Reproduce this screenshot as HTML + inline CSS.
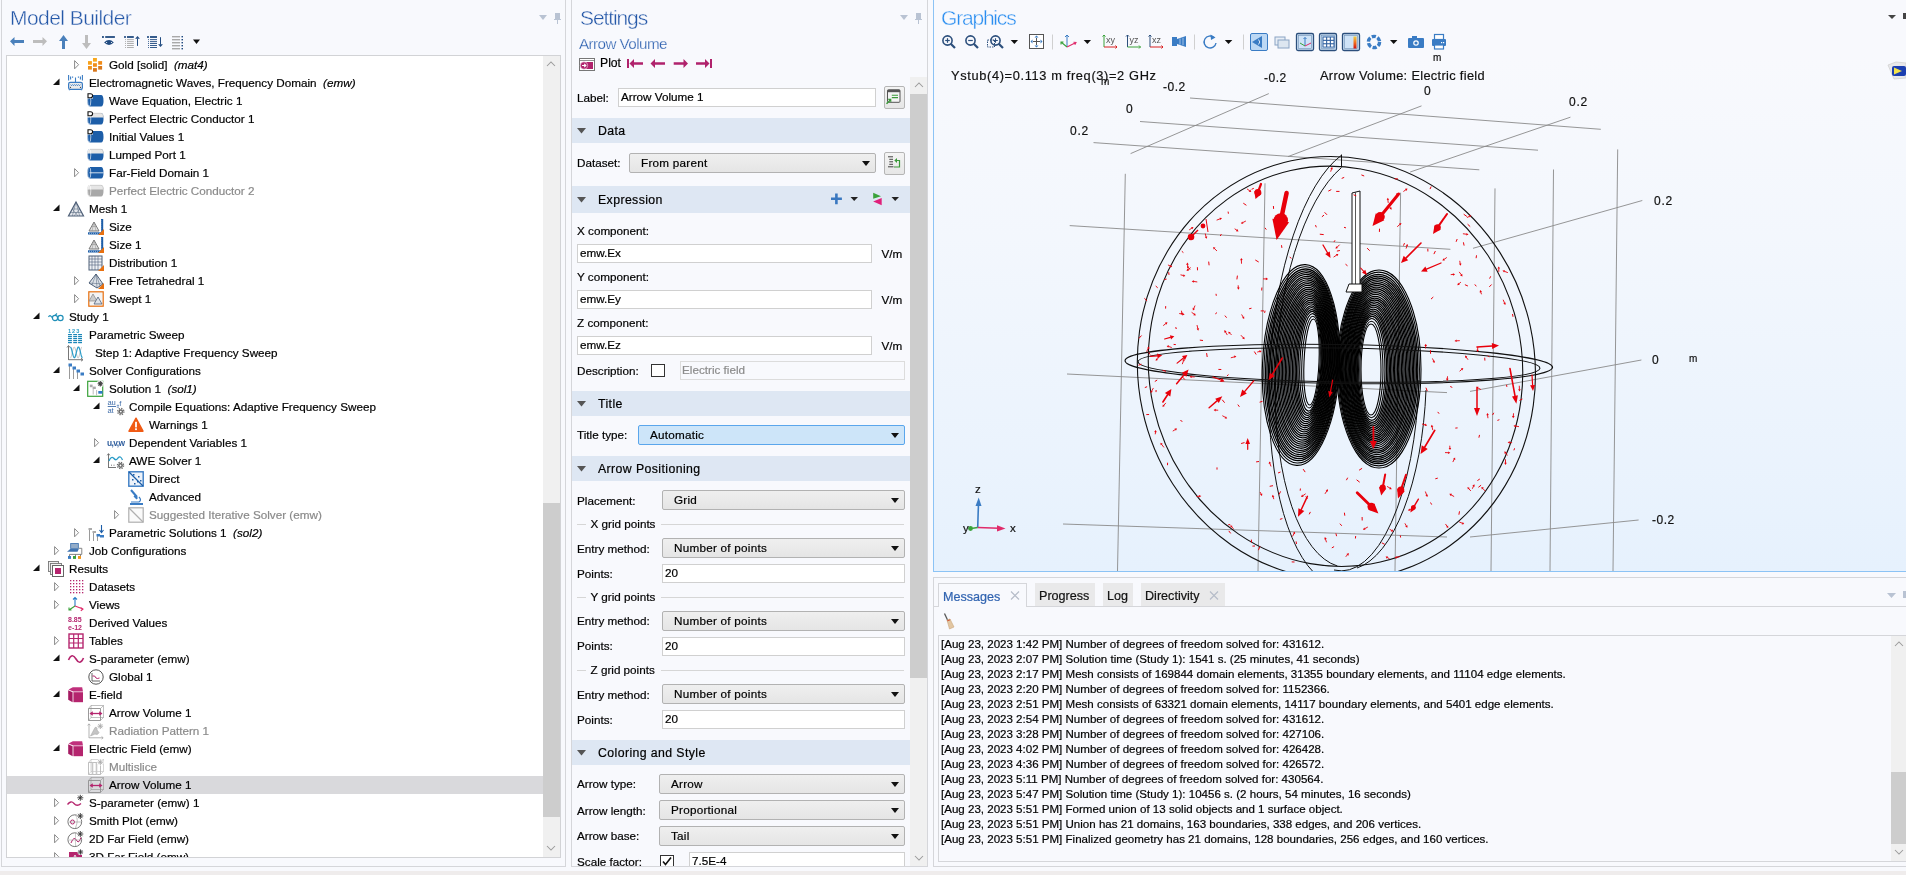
<!DOCTYPE html>
<html><head><meta charset="utf-8"><style>
html,body{margin:0;padding:0;}
body{width:1906px;height:875px;overflow:hidden;position:relative;background:#f8f9fd;font-family:"Liberation Sans",sans-serif;}
.t{position:absolute;white-space:pre;font-family:"Liberation Sans",sans-serif;-webkit-text-stroke:0.2px currentColor}
body>div,body>svg{will-change:transform}
svg{overflow:visible}
</style></head><body>
<div style="position:absolute;left:1px;top:0px;width:565px;height:867px;box-sizing:border-box;border-left:1px solid #d5d6da;border-right:1px solid #d5d6da;border-bottom:1px solid #d5d6da;background:#f8f9fd"></div>
<div style="position:absolute;left:571px;top:0px;width:357px;height:867px;box-sizing:border-box;border-left:1px solid #d5d6da;border-right:1px solid #d5d6da;border-bottom:1px solid #d5d6da;background:#f8f9fd"></div>
<div style="position:absolute;left:0px;top:871px;width:1906px;height:4px;background:#efecec"></div>
<div class="t" style="left:10.00px;top:8.42px;font-size:21px;line-height:20px;color:#2558a8;letter-spacing:-0.55px;-webkit-text-stroke:0.4px #f8f9fd">Model Builder</div>
<div class="t" style="left:579.50px;top:8.42px;font-size:21px;line-height:20px;color:#2558a8;letter-spacing:-1.1px;-webkit-text-stroke:0.4px #f8f9fd">Settings</div>
<svg style="position:absolute;left:539px;top:15px;" width="8" height="5" viewBox="0 0 8 5"><path d="M0 0H8L4 5Z" fill="#b9c3d3"/></svg>
<svg style="position:absolute;left:554px;top:13px;" width="7" height="11" viewBox="0 0 7 11"><path d="M1 0H6V6H7V7H4V11H3V7H0V6H1Z" fill="#b9c3d3"/></svg>
<svg style="position:absolute;left:900px;top:15px;" width="8" height="5" viewBox="0 0 8 5"><path d="M0 0H8L4 5Z" fill="#b9c3d3"/></svg>
<svg style="position:absolute;left:915px;top:13px;" width="7" height="11" viewBox="0 0 7 11"><path d="M1 0H6V6H7V7H4V11H3V7H0V6H1Z" fill="#b9c3d3"/></svg>
<svg style="position:absolute;left:0px;top:0px;" width="210" height="60" viewBox="0 0 210 60"><path d="M10 41.3L14.5 37V40H24V43H14.5V46Z" fill="#4a80bb"/><path d="M47 41.3L42.5 37V40H33V43H42.5V46Z" fill="#bdbdbd"/><path d="M63.5 35L68 41H65V49H62V41H59Z" fill="#4a80bb"/><path d="M86.5 49L91 43H88V35H85V43H82Z" fill="#bdbdbd"/><rect x="102" y="36.1" width="1.9" height="1.8" fill="#214b80"/><rect x="105.2" y="36.1" width="9.7" height="1.8" fill="#214b80"/><path d="M104.1 42.5Q109 37.6 113.8 42.5Q109 47.4 104.1 42.5Z" fill="#214b80"/><circle cx="106.6" cy="42.5" r="0.6" fill="#fff"/><circle cx="111.5" cy="42.5" r="0.6" fill="#fff"/><rect x="124.1" y="36.1" width="1.8" height="1.8" fill="#214b80"/><rect x="127" y="36.1" width="6.8" height="1.8" fill="#214b80"/><rect x="125" y="39.2" width="0.9" height="0.9" fill="#a0a0a0"/><rect x="127" y="39.2" width="6.8" height="0.9" fill="#a8a8a8"/><rect x="125" y="41.2" width="0.9" height="0.9" fill="#a0a0a0"/><rect x="127" y="41.2" width="6.8" height="0.9" fill="#a8a8a8"/><rect x="125" y="43.1" width="0.9" height="0.9" fill="#a0a0a0"/><rect x="127" y="43.1" width="6.8" height="0.9" fill="#a8a8a8"/><rect x="125" y="45.1" width="0.9" height="0.9" fill="#a0a0a0"/><rect x="127" y="45.1" width="6.8" height="0.9" fill="#a8a8a8"/><rect x="125" y="47.1" width="0.9" height="0.9" fill="#a0a0a0"/><rect x="127" y="47.1" width="6.8" height="0.9" fill="#a8a8a8"/><path d="M137.5 36.1L139.9 38.8H135.1Z" fill="#214b80"/><rect x="137" y="38.5" width="1" height="7.4" fill="#214b80"/><rect x="147.1" y="36.1" width="1.8" height="1.8" fill="#214b80"/><rect x="150" y="36.1" width="7" height="1.8" fill="#214b80"/><rect x="148.1" y="39.2" width="0.9" height="0.9" fill="#214b80"/><rect x="150" y="39.2" width="7" height="0.9" fill="#214b80"/><rect x="148.1" y="41.2" width="0.9" height="0.9" fill="#214b80"/><rect x="150" y="41.2" width="7" height="0.9" fill="#214b80"/><rect x="148.1" y="43.1" width="0.9" height="0.9" fill="#214b80"/><rect x="150" y="43.1" width="7" height="0.9" fill="#214b80"/><rect x="148.1" y="45.1" width="0.9" height="0.9" fill="#214b80"/><rect x="150" y="45.1" width="7" height="0.9" fill="#214b80"/><rect x="148.1" y="47.1" width="0.9" height="0.9" fill="#214b80"/><rect x="150" y="47.1" width="7" height="0.9" fill="#214b80"/><rect x="160" y="37.2" width="1" height="7.4" fill="#214b80"/><path d="M160.5 46.9L162.9 44.3H158.1Z" fill="#214b80"/><rect x="172" y="36" width="8" height="1.4" fill="#a9a9a9"/><rect x="181.5" y="36" width="1.5" height="1.4" fill="#214b80"/><rect x="172" y="39" width="8" height="1.4" fill="#a9a9a9"/><rect x="181.5" y="39" width="1.5" height="1.4" fill="#214b80"/><rect x="172" y="42" width="8" height="1.4" fill="#a9a9a9"/><rect x="181.5" y="42" width="1.5" height="1.4" fill="#214b80"/><rect x="172" y="45" width="8" height="1.4" fill="#a9a9a9"/><rect x="181.5" y="45" width="1.5" height="1.4" fill="#214b80"/><rect x="172" y="48" width="8" height="1.4" fill="#a9a9a9"/><rect x="181.5" y="48" width="1.5" height="1.4" fill="#214b80"/><path d="M193 39.5H200L196.5 44Z" fill="#111"/></svg>
<div style="position:absolute;left:6px;top:55px;width:555px;height:803px;box-sizing:border-box;border:1px solid #d2d3d6;background:#fff"></div>
<div style="position:absolute;left:543px;top:56px;width:17px;height:801px;background:#f0f0f0"></div>
<div style="position:absolute;left:543px;top:503px;width:17px;height:314px;background:#cdcdcd"></div>
<svg style="position:absolute;left:546px;top:61px;" width="10" height="6" viewBox="0 0 10 6"><path d="M1 5L5 1L9 5" stroke="#9a9a9a" stroke-width="1.05" fill="none"/></svg>
<svg style="position:absolute;left:546px;top:845px;" width="10" height="6" viewBox="0 0 10 6"><path d="M1 1L5 5L9 1" stroke="#9a9a9a" stroke-width="1.05" fill="none"/></svg>
<div style="position:absolute;left:7px;top:776px;width:536px;height:18px;background:#d9d9dc"></div>
<div style="position:absolute;left:0;top:0;width:560px;height:857px;overflow:hidden;clip-path:inset(56px 17px 0 7px)"><div class="t" style="left:109.00px;top:54.95px;font-size:11.7px;line-height:20px;color:#000;">Gold [solid]  <i>(mat4)</i></div><div class="t" style="left:89.00px;top:72.95px;font-size:11.7px;line-height:20px;color:#000;">Electromagnetic Waves, Frequency Domain  <i>(emw)</i></div><div class="t" style="left:109.00px;top:90.95px;font-size:11.7px;line-height:20px;color:#000;">Wave Equation, Electric 1</div><div class="t" style="left:109.00px;top:108.95px;font-size:11.7px;line-height:20px;color:#000;">Perfect Electric Conductor 1</div><div class="t" style="left:109.00px;top:126.95px;font-size:11.7px;line-height:20px;color:#000;">Initial Values 1</div><div class="t" style="left:109.00px;top:144.95px;font-size:11.7px;line-height:20px;color:#000;">Lumped Port 1</div><div class="t" style="left:109.00px;top:162.95px;font-size:11.7px;line-height:20px;color:#000;">Far-Field Domain 1</div><div class="t" style="left:109.00px;top:180.95px;font-size:11.7px;line-height:20px;color:#8a8a8a;">Perfect Electric Conductor 2</div><div class="t" style="left:89.00px;top:198.95px;font-size:11.7px;line-height:20px;color:#000;">Mesh 1</div><div class="t" style="left:109.00px;top:216.95px;font-size:11.7px;line-height:20px;color:#000;">Size</div><div class="t" style="left:109.00px;top:234.95px;font-size:11.7px;line-height:20px;color:#000;">Size 1</div><div class="t" style="left:109.00px;top:252.95px;font-size:11.7px;line-height:20px;color:#000;">Distribution 1</div><div class="t" style="left:109.00px;top:270.95px;font-size:11.7px;line-height:20px;color:#000;">Free Tetrahedral 1</div><div class="t" style="left:109.00px;top:288.95px;font-size:11.7px;line-height:20px;color:#000;">Swept 1</div><div class="t" style="left:69.00px;top:306.95px;font-size:11.7px;line-height:20px;color:#000;">Study 1</div><div class="t" style="left:89.00px;top:324.95px;font-size:11.7px;line-height:20px;color:#000;">Parametric Sweep</div><div class="t" style="left:95.00px;top:342.95px;font-size:11.7px;line-height:20px;color:#000;">Step 1: Adaptive Frequency Sweep</div><div class="t" style="left:89.00px;top:360.95px;font-size:11.7px;line-height:20px;color:#000;">Solver Configurations</div><div class="t" style="left:109.00px;top:378.95px;font-size:11.7px;line-height:20px;color:#000;">Solution 1  <i>(sol1)</i></div><div class="t" style="left:129.00px;top:396.95px;font-size:11.7px;line-height:20px;color:#000;">Compile Equations: Adaptive Frequency Sweep</div><div class="t" style="left:149.00px;top:414.95px;font-size:11.7px;line-height:20px;color:#000;">Warnings 1</div><div class="t" style="left:129.00px;top:432.95px;font-size:11.7px;line-height:20px;color:#000;">Dependent Variables 1</div><div class="t" style="left:129.00px;top:450.95px;font-size:11.7px;line-height:20px;color:#000;">AWE Solver 1</div><div class="t" style="left:149.00px;top:468.95px;font-size:11.7px;line-height:20px;color:#000;">Direct</div><div class="t" style="left:149.00px;top:486.95px;font-size:11.7px;line-height:20px;color:#000;">Advanced</div><div class="t" style="left:149.00px;top:504.95px;font-size:11.7px;line-height:20px;color:#8a8a8a;">Suggested Iterative Solver (emw)</div><div class="t" style="left:109.00px;top:522.95px;font-size:11.7px;line-height:20px;color:#000;">Parametric Solutions 1  <i>(sol2)</i></div><div class="t" style="left:89.00px;top:540.95px;font-size:11.7px;line-height:20px;color:#000;">Job Configurations</div><div class="t" style="left:69.00px;top:558.95px;font-size:11.7px;line-height:20px;color:#000;">Results</div><div class="t" style="left:89.00px;top:576.95px;font-size:11.7px;line-height:20px;color:#000;">Datasets</div><div class="t" style="left:89.00px;top:594.95px;font-size:11.7px;line-height:20px;color:#000;">Views</div><div class="t" style="left:89.00px;top:612.95px;font-size:11.7px;line-height:20px;color:#000;">Derived Values</div><div class="t" style="left:89.00px;top:630.95px;font-size:11.7px;line-height:20px;color:#000;">Tables</div><div class="t" style="left:89.00px;top:648.95px;font-size:11.7px;line-height:20px;color:#000;">S-parameter (emw)</div><div class="t" style="left:109.00px;top:666.95px;font-size:11.7px;line-height:20px;color:#000;">Global 1</div><div class="t" style="left:89.00px;top:684.95px;font-size:11.7px;line-height:20px;color:#000;">E-field</div><div class="t" style="left:109.00px;top:702.95px;font-size:11.7px;line-height:20px;color:#000;">Arrow Volume 1</div><div class="t" style="left:109.00px;top:720.95px;font-size:11.7px;line-height:20px;color:#8a8a8a;">Radiation Pattern 1</div><div class="t" style="left:89.00px;top:738.95px;font-size:11.7px;line-height:20px;color:#000;">Electric Field (emw)</div><div class="t" style="left:109.00px;top:756.95px;font-size:11.7px;line-height:20px;color:#8a8a8a;">Multislice</div><div class="t" style="left:109.00px;top:774.95px;font-size:11.7px;line-height:20px;color:#000;">Arrow Volume 1</div><div class="t" style="left:89.00px;top:792.95px;font-size:11.7px;line-height:20px;color:#000;">S-parameter (emw) 1</div><div class="t" style="left:89.00px;top:810.95px;font-size:11.7px;line-height:20px;color:#000;">Smith Plot (emw)</div><div class="t" style="left:89.00px;top:828.95px;font-size:11.7px;line-height:20px;color:#000;">2D Far Field (emw)</div><div class="t" style="left:89.00px;top:846.95px;font-size:11.7px;line-height:20px;color:#000;">3D Far Field (emw)</div><svg style="position:absolute;left:0px;top:0px;" width="560" height="857" viewBox="0 0 560 857"><g transform="translate(88,57)"><rect x="5" y="1" width="3.9" height="3.6" fill="#f9a81c"/><rect x="0" y="4.1" width="3.9" height="3.6" fill="#f8a21a"/><rect x="5" y="6.2" width="3.9" height="3.6" fill="#f08e1a"/><rect x="10.2" y="4.1" width="3.9" height="3.6" fill="#f08a16"/><rect x="0" y="9" width="3.9" height="3.6" fill="#f0901a"/><rect x="5" y="11.1" width="3.9" height="3.6" fill="#d8761a"/><rect x="10.2" y="9" width="3.9" height="3.6" fill="#d9781a"/></g><path d="M74.6 60.6L78.6 64.7L74.6 68.8Z" fill="#fff" stroke="#8a8a8a" stroke-width="1"/><g transform="translate(68,75)"><path d="M0.6 0V5.5M14.4 0V5.5M2.6 1.5V4.5M12.4 1.5V4.5M4.6 1.5V2.8M10.4 1.5V2.8M7.5 2.5V7.5" stroke="#3a7cc4" stroke-width="1.1"/><rect x="0.6" y="7.3" width="13.8" height="7" rx="1.6" fill="#ebebeb" stroke="#3a7cc4" stroke-width="1.2"/><path d="M2.5 9.6L3.5 10.6L4.5 9.6L5.5 10.6L6.5 9.6L7.5 10.6L8.5 9.6L9.5 10.6L10.5 9.6L11.5 10.6L12.5 9.6" stroke="#3a7cc4" stroke-width="1" fill="none"/><circle cx="2.5" cy="12.3" r="0.6" fill="#333"/><circle cx="12.5" cy="12.3" r="0.6" fill="#333"/><path d="M1.5 14.5V15.3M13.5 14.5V15.3" stroke="#3a7cc4" stroke-width="1.2"/></g><path d="M53 85H59.5V78.5Z" fill="#111"/><g transform="translate(88,93)"><path d="M2 2H13Q15.5 2 15.5 7.8Q15.5 13.6 13 13.6H2Q-0.8 13.6 -0.8 7.8Q-0.8 2 2 2Z" fill="#1d5ea8"/><ellipse cx="1.2" cy="7.8" rx="1.6" ry="5.6" fill="none" stroke="#fff" stroke-width="0.7" opacity="0.9"/><rect x="-1" y="0" width="6" height="5.5" fill="#fff"/><path d="M0 0.8H2.4Q4.6 0.8 4.6 2.8Q4.6 4.8 2.4 4.8H0Z" fill="none" stroke="#111" stroke-width="1.1"/></g><g transform="translate(88,111)"><path d="M2 2H13Q15.5 2 15.5 7.8Q15.5 13.6 13 13.6H2Q-0.8 13.6 -0.8 7.8Q-0.8 2 2 2Z" fill="#1d5ea8"/><path d="M2 2H13Q15.5 2 15.5 6.5H-0.8Q-0.8 2 2 2Z" fill="#e6e6e6"/><path d="M2 2.3H13Q15.2 2.3 15.3 6.5" stroke="#bdbdbd" stroke-width="0.6" fill="none"/><ellipse cx="1.2" cy="7.8" rx="1.6" ry="5.6" fill="none" stroke="#fff" stroke-width="0.7" opacity="0.9"/><rect x="-1" y="0" width="6" height="5.5" fill="#fff"/><path d="M0 0.8H2.4Q4.6 0.8 4.6 2.8Q4.6 4.8 2.4 4.8H0Z" fill="none" stroke="#111" stroke-width="1.1"/></g><g transform="translate(88,129)"><path d="M2 2H13Q15.5 2 15.5 7.8Q15.5 13.6 13 13.6H2Q-0.8 13.6 -0.8 7.8Q-0.8 2 2 2Z" fill="#1d5ea8"/><ellipse cx="1.2" cy="7.8" rx="1.6" ry="5.6" fill="none" stroke="#fff" stroke-width="0.7" opacity="0.9"/><rect x="-1" y="0" width="6" height="5.5" fill="#fff"/><path d="M0 0.8H2.4Q4.6 0.8 4.6 2.8Q4.6 4.8 2.4 4.8H0Z" fill="none" stroke="#111" stroke-width="1.1"/></g><g transform="translate(88,147)"><path d="M2 2H13Q15.5 2 15.5 7.8Q15.5 13.6 13 13.6H2Q-0.8 13.6 -0.8 7.8Q-0.8 2 2 2Z" fill="#1d5ea8"/><path d="M2 2H13Q15.5 2 15.5 6.5H-0.8Q-0.8 2 2 2Z" fill="#e6e6e6"/><path d="M2 2.3H13Q15.2 2.3 15.3 6.5" stroke="#bdbdbd" stroke-width="0.6" fill="none"/><ellipse cx="1.2" cy="7.8" rx="1.6" ry="5.6" fill="none" stroke="#fff" stroke-width="0.7" opacity="0.9"/></g><g transform="translate(88,165)"><path d="M2 2H13Q15.5 2 15.5 7.8Q15.5 13.6 13 13.6H2Q-0.8 13.6 -0.8 7.8Q-0.8 2 2 2Z" fill="#1d5ea8"/><ellipse cx="1.2" cy="7.8" rx="1.6" ry="5.6" fill="none" stroke="#fff" stroke-width="0.7" opacity="0.9"/><path d="M1.5 7.8H15.5" stroke="#fff" stroke-width="0.8"/></g><path d="M74.6 168.6L78.6 172.7L74.6 176.8Z" fill="#fff" stroke="#8a8a8a" stroke-width="1"/><g transform="translate(88,183)"><path d="M2 2H13Q15.5 2 15.5 7.8Q15.5 13.6 13 13.6H2Q-0.8 13.6 -0.8 7.8Q-0.8 2 2 2Z" fill="#a8a8a8"/><path d="M2 2H13Q15.5 2 15.5 6.5H-0.8Q-0.8 2 2 2Z" fill="#e6e6e6"/><path d="M2 2.3H13Q15.2 2.3 15.3 6.5" stroke="#bdbdbd" stroke-width="0.6" fill="none"/><ellipse cx="1.2" cy="7.8" rx="1.6" ry="5.6" fill="none" stroke="#fff" stroke-width="0.7" opacity="0.9"/></g><g transform="translate(68,201)"><path d="M8 1L15.5 15H0.5Z" fill="#e4e7ec" stroke="#4f6078" stroke-width="1.2"/><path d="M4.3 8H11.7M2.4 11.5H13.6M8 1L4.3 15M8 1L11.7 15M4.3 8L10 15M11.7 8L6 15" stroke="#4f6078" stroke-width="0.5"/></g><path d="M53 211H59.5V204.5Z" fill="#111"/><g transform="translate(88,219)"><path d="M6 3L11 12H1Z" fill="#e2e2e2" stroke="#7a7a7a" stroke-width="1"/><path d="M3.5 7.5H8.5M6 3L4 12M6 3L8 12" stroke="#8a8a8a" stroke-width="0.5"/><rect x="13" y="0" width="2.2" height="14" fill="#1d5ea8"/><rect x="0" y="13.3" width="15" height="2.2" fill="#1d5ea8"/><path d="M13.2 1.5V13M1 14.4H13" stroke="#fff" stroke-width="0.6" stroke-dasharray="0.8 1.2"/><path d="M16 10V16H10Z" fill="#e8700f"/></g><g transform="translate(88,237)"><path d="M6 3L11 12H1Z" fill="#e2e2e2" stroke="#7a7a7a" stroke-width="1"/><path d="M3.5 7.5H8.5M6 3L4 12M6 3L8 12" stroke="#8a8a8a" stroke-width="0.5"/><rect x="13" y="0" width="2.2" height="14" fill="#1d5ea8"/><rect x="0" y="13.3" width="15" height="2.2" fill="#1d5ea8"/><path d="M13.2 1.5V13M1 14.4H13" stroke="#fff" stroke-width="0.6" stroke-dasharray="0.8 1.2"/><path d="M16 10V16H10Z" fill="#e8700f"/></g><g transform="translate(88,255)"><rect x="1" y="1" width="13" height="14" fill="#eef1f5" stroke="#4f6078" stroke-width="1"/><path d="M4 1V15M7 1V15M10 1V15M1 4H14M1 7H14M1 10H14" stroke="#4f6078" stroke-width="0.6"/><path d="M16 10V16H10Z" fill="#e8700f"/></g><g transform="translate(88,273)"><path d="M8 1L15 11L9 15L1 10Z" fill="#dde2e8" stroke="#4f6078" stroke-width="1"/><path d="M8 1L9 15M1 10L15 11M8 1L4 12M8 1L12 13" stroke="#4f6078" stroke-width="0.5"/><path d="M16 10V16H10Z" fill="#e8700f"/></g><path d="M74.6 276.6L78.6 280.7L74.6 284.8Z" fill="#fff" stroke="#8a8a8a" stroke-width="1"/><g transform="translate(88,291)"><rect x="0.8" y="0.8" width="14.4" height="14.4" fill="#f4f4f4" stroke="#e8700f" stroke-width="1.2"/><path d="M5 3L9 10H1Z" fill="#ccc" stroke="#888" stroke-width="0.7"/><path d="M10 6L14 13H6Z" fill="#dde2e8" stroke="#4f6078" stroke-width="0.8"/></g><path d="M74.6 294.6L78.6 298.7L74.6 302.8Z" fill="#fff" stroke="#8a8a8a" stroke-width="1"/><g transform="translate(48,309)"><path d="M0.5 8Q2 5 4 8.5" stroke="#1f8fb8" stroke-width="1.2" fill="none"/><circle cx="7" cy="9" r="2.6" fill="none" stroke="#1f8fb8" stroke-width="1.2"/><circle cx="12.5" cy="9" r="2.6" fill="none" stroke="#1f8fb8" stroke-width="1.2"/><path d="M7 6.4L9 4.5" stroke="#1f8fb8" stroke-width="1.1"/></g><path d="M33 319H39.5V312.5Z" fill="#111"/><g transform="translate(68,327)"><text x="0" y="5.6" font-size="5.6" font-weight="bold" fill="#2a9cc8" font-family="Liberation Sans" letter-spacing="-0.3">1 2 3</text><rect x="0" y="7" width="3.9" height="1.2" fill="#1a86b8"/><rect x="5.2" y="7" width="3.9" height="1.2" fill="#1a86b8"/><rect x="10.1" y="7" width="3.9" height="1.2" fill="#1a86b8"/><rect x="0" y="9" width="3.9" height="1.2" fill="#1a86b8"/><rect x="5.2" y="9" width="3.9" height="1.2" fill="#1a86b8"/><rect x="10.1" y="9" width="3.9" height="1.2" fill="#1a86b8"/><rect x="0" y="11" width="3.9" height="1.2" fill="#1a86b8"/><rect x="5.2" y="11" width="3.9" height="1.2" fill="#1a86b8"/><rect x="10.1" y="11" width="3.9" height="1.2" fill="#1a86b8"/><rect x="0" y="13" width="3.9" height="1.2" fill="#1a86b8"/><rect x="5.2" y="13" width="3.9" height="1.2" fill="#1a86b8"/><rect x="10.1" y="13" width="3.9" height="1.2" fill="#1a86b8"/><rect x="0" y="15" width="3.9" height="1.2" fill="#1a86b8"/><rect x="5.2" y="15" width="3.9" height="1.2" fill="#1a86b8"/><rect x="10.1" y="15" width="3.9" height="1.2" fill="#1a86b8"/></g><g transform="translate(68,345)"><path d="M0.5 15V1M-1 2.5L0.5 0.5L2 2.5M0.5 14.7H15M13 13.2L15 14.7L13 16.2" stroke="#777" stroke-width="1" fill="none"/><path d="M2.30 13.00L2.59 12.85L2.88 12.40L3.18 11.68L3.47 10.73L3.76 9.60L4.05 8.36L4.35 7.07L4.64 5.80L4.93 4.63L5.22 3.61L5.52 2.81L5.81 2.27L6.10 2.02L6.39 2.07L6.69 2.42L6.98 3.05L7.27 3.93L7.56 5.00L7.86 6.22L8.15 7.50L8.44 8.78L8.73 10.00L9.03 11.07L9.32 11.95L9.61 12.58L9.90 12.93L10.20 12.98L10.49 12.73L10.78 12.19L11.07 11.39L11.37 10.37L11.66 9.20L11.95 7.93L12.24 6.64L12.54 5.40L12.83 4.27L13.12 3.32L13.41 2.60L13.71 2.15L14.00 2.00" stroke="#bbb" stroke-width="0.9" fill="none"/><path d="M2.30 2.00L2.60 2.15L2.91 2.58L3.21 3.28L3.52 4.21L3.82 5.30L4.13 6.51L4.43 7.77L4.74 9.00L5.04 10.15L5.35 11.13L5.65 11.91L5.96 12.44L6.26 12.68L6.57 12.63L6.87 12.29L7.18 11.68L7.48 10.82L7.79 9.78L8.09 8.60L8.40 7.35L8.71 6.10L9.01 4.92L9.31 3.88L9.62 3.02L9.93 2.41L10.23 2.07L10.54 2.02L10.84 2.26L11.14 2.79L11.45 3.57L11.75 4.55L12.06 5.70L12.36 6.93L12.67 8.19L12.97 9.40L13.28 10.49L13.59 11.42L13.89 12.12L14.20 12.55L14.50 12.70" stroke="#2a9cc8" stroke-width="1.2" fill="none"/></g><g transform="translate(68,363)"><path d="M1.5 2V16M5.5 5V16M9.5 8V16" stroke="#9a9a9a" stroke-width="1"/><rect x="0.5" y="0.5" width="3.5" height="3" fill="#3a7cc4"/><rect x="4.5" y="3.5" width="3.5" height="3" fill="#3a7cc4"/><rect x="8.5" y="6.5" width="3.5" height="3" fill="#3a7cc4"/><rect x="12.5" y="9.5" width="3.5" height="3" fill="#3a7cc4"/></g><path d="M53 373H59.5V366.5Z" fill="#111"/><g transform="translate(88,381)"><rect x="-0.3" y="3.3" width="15" height="15" fill="#fff" stroke="#3aa23a" stroke-width="1.2" transform="translate(0,-3)"/><rect x="1.8" y="3.6" width="2.8" height="2.6" fill="#aaa"/><rect x="4.6" y="5.6" width="3.2" height="2.4" fill="#aaa"/><path d="M5.2 8V13.5" stroke="#bbb" stroke-width="1"/><rect x="10.3" y="10" width="4.2" height="2.7" fill="#2f7bc8"/><path d="M8.6 9V14.5" stroke="#bbb" stroke-width="1"/><circle cx="12.3" cy="2.7" r="3.4" fill="#fff"/><path d="M12.3 0V5.4M9.6 2.7H15M10.4 0.8L14.2 4.6M14.2 0.8L10.4 4.6" stroke="#444" stroke-width="1.1"/></g><path d="M73 391H79.5V384.5Z" fill="#111"/><g transform="translate(108,399)"><text x="-0.5" y="6.2" font-size="7.6" fill="#3d6ba8" font-family="Liberation Sans" letter-spacing="-0.3">au</text><path d="M-0.3 7.5H8" stroke="#3d6ba8" stroke-width="0.9"/><text x="-0.5" y="13.6" font-size="7.6" fill="#3d6ba8" font-family="Liberation Sans" letter-spacing="-0.3">at</text><text x="11.2" y="6.5" font-size="7.6" fill="#3d6ba8" font-family="Liberation Sans">f</text><path d="M8.8 6.3H11M8.8 8.1H11" stroke="#3d6ba8" stroke-width="0.8"/><circle cx="12.8" cy="12.6" r="2.4" fill="#6a6a6a"/><circle cx="12.8" cy="12.6" r="3.1" fill="none" stroke="#6a6a6a" stroke-width="1.3" stroke-dasharray="1.3 1.13"/><circle cx="12.8" cy="12.6" r="0.9" fill="#fff"/></g><path d="M93 409H99.5V402.5Z" fill="#111"/><g transform="translate(128,417)"><path d="M8 1.2L15 14.2H1Z" fill="#f05a14" stroke="#f05a14" stroke-width="1.4" stroke-linejoin="round"/><rect x="7.1" y="4.8" width="1.8" height="5.6" fill="#fff"/><rect x="7.1" y="11.3" width="1.8" height="1.8" fill="#fff"/></g><g transform="translate(108,435)"><text x="-1" y="10.5" font-size="8.4" font-weight="bold" fill="#2f5e9e" font-family="Liberation Sans" letter-spacing="-0.6">u,v,w</text></g><path d="M94.6 438.6L98.6 442.7L94.6 446.8Z" fill="#fff" stroke="#8a8a8a" stroke-width="1"/><g transform="translate(108,453)"><path d="M0.5 15V1M-0.8 2.3L0.5 0.6L1.8 2.3M0.5 14.5H8" stroke="#666" stroke-width="0.9" fill="none"/><path d="M1 8Q3 3 5.5 5Q8 8.5 10 5Q12.5 2 14.5 7" stroke="#2a9cc8" stroke-width="1.3" fill="none"/><path d="M3 12.2H4M5.5 12.2H6.5" stroke="#666" stroke-width="0.9"/><circle cx="12.5" cy="12.5" r="2.4" fill="#6a6a6a"/><circle cx="12.5" cy="12.5" r="3.1" fill="none" stroke="#6a6a6a" stroke-width="1.3" stroke-dasharray="1.3 1.13"/><circle cx="12.5" cy="12.5" r="0.9" fill="#fff"/></g><path d="M93 463H99.5V456.5Z" fill="#111"/><g transform="translate(128,471)"><rect x="0.8" y="0.8" width="14.4" height="14.4" fill="#eef3fa" stroke="#3a7cc4" stroke-width="1.4"/><path d="M1 1L15 15" stroke="#1d5ea8" stroke-width="1.2"/><rect x="5" y="3" width="1.5" height="1.5" fill="#1d5ea8"/><rect x="10" y="5" width="1.5" height="1.5" fill="#1d5ea8"/><rect x="4" y="8" width="1.5" height="1.5" fill="#1d5ea8"/><rect x="9" y="10" width="1.5" height="1.5" fill="#1d5ea8"/><rect x="12" y="9" width="1.5" height="1.5" fill="#1d5ea8"/><rect x="6" y="12" width="1.5" height="1.5" fill="#1d5ea8"/></g><g transform="translate(128,489)"><path d="M3 1L9 8" stroke="#3a7cc4" stroke-width="2"/><path d="M7 6L10 9L8.5 10.5L5.5 7.5Z" fill="#3a7cc4"/><path d="M11 8Q14 11 11 13H3" stroke="#3a7cc4" stroke-width="1.2" fill="none"/><rect x="2" y="14" width="13" height="2" fill="#3a7cc4"/></g><g transform="translate(128,507)"><rect x="0.8" y="0.8" width="14.4" height="14.4" fill="#fafafa" stroke="#b0b0b0" stroke-width="1.2"/><path d="M1 1L15 15" stroke="#b0b0b0" stroke-width="1.2"/></g><path d="M114.6 510.6L118.6 514.7L114.6 518.8Z" fill="#fff" stroke="#8a8a8a" stroke-width="1"/><g transform="translate(88,525)"><path d="M1.5 4V16M5.5 6V16M9.5 9V16" stroke="#9a9a9a" stroke-width="1"/><rect x="0.5" y="3" width="3.5" height="2" fill="#aaa"/><rect x="4.5" y="6" width="3.5" height="2" fill="#aaa"/><rect x="8.5" y="9" width="3.5" height="2.5" fill="#3a7cc4"/><rect x="12" y="10" width="4" height="2.5" fill="#3a7cc4"/><path d="M13.5 0V7M11.5 5L13.5 7.5L15.5 5" stroke="#1d5ea8" stroke-width="1.1" fill="none"/></g><path d="M74.6 528.6L78.6 532.7L74.6 536.8Z" fill="#fff" stroke="#8a8a8a" stroke-width="1"/><g transform="translate(68,543)"><rect x="2.2" y="0.1" width="8.6" height="5.8" fill="#3f73b0"/><rect x="3.1" y="1" width="6.8" height="4.2" fill="#93acc8"/><path d="M2.2 5.9H10.8L9.5 8.8H-1Z" fill="#3f73b0"/><path d="M10.8 5.3H13.8V11.4H1.5V13M7.5 11.4V13M12.5 11.4V13" stroke="#777" stroke-width="0.9" fill="none"/><rect x="0" y="13" width="3" height="2.9" fill="#3a7cc4"/><rect x="5" y="13" width="3" height="2.9" fill="#3aa23a"/><rect x="10" y="13" width="3" height="2.9" fill="#f5961a"/></g><path d="M54.6 546.6L58.6 550.7L54.6 554.8Z" fill="#fff" stroke="#8a8a8a" stroke-width="1"/><g transform="translate(48,561)"><rect x="0.5" y="0.5" width="10" height="10" fill="#eee" stroke="#777" stroke-width="0.9"/><rect x="2.5" y="2.5" width="11" height="11" fill="#f3f3f3" stroke="#777" stroke-width="0.9"/><rect x="4.5" y="4.5" width="11" height="11" fill="#fff" stroke="#666" stroke-width="1"/><rect x="7" y="7" width="6" height="6" fill="#b5256e"/></g><path d="M33 571H39.5V564.5Z" fill="#111"/><g transform="translate(68,579)"><rect x="2" y="1" width="1.3" height="1.3" fill="#b5256e"/><rect x="5" y="1" width="1.3" height="1.3" fill="#b5256e"/><rect x="8" y="1" width="1.3" height="1.3" fill="#b5256e"/><rect x="11" y="1" width="1.3" height="1.3" fill="#b5256e"/><rect x="14" y="1" width="1.3" height="1.3" fill="#b5256e"/><rect x="2" y="4" width="1.3" height="1.3" fill="#b5256e"/><rect x="5" y="4" width="1.3" height="1.3" fill="#b5256e"/><rect x="8" y="4" width="1.3" height="1.3" fill="#b5256e"/><rect x="11" y="4" width="1.3" height="1.3" fill="#b5256e"/><rect x="14" y="4" width="1.3" height="1.3" fill="#b5256e"/><rect x="2" y="7" width="1.3" height="1.3" fill="#b5256e"/><rect x="5" y="7" width="1.3" height="1.3" fill="#b5256e"/><rect x="8" y="7" width="1.3" height="1.3" fill="#b5256e"/><rect x="11" y="7" width="1.3" height="1.3" fill="#b5256e"/><rect x="14" y="7" width="1.3" height="1.3" fill="#b5256e"/><rect x="2" y="10" width="1.3" height="1.3" fill="#b5256e"/><rect x="5" y="10" width="1.3" height="1.3" fill="#b5256e"/><rect x="8" y="10" width="1.3" height="1.3" fill="#b5256e"/><rect x="11" y="10" width="1.3" height="1.3" fill="#b5256e"/><rect x="14" y="10" width="1.3" height="1.3" fill="#b5256e"/><rect x="2" y="13" width="1.3" height="1.3" fill="#b5256e"/><rect x="5" y="13" width="1.3" height="1.3" fill="#b5256e"/><rect x="8" y="13" width="1.3" height="1.3" fill="#b5256e"/><rect x="11" y="13" width="1.3" height="1.3" fill="#b5256e"/><rect x="14" y="13" width="1.3" height="1.3" fill="#b5256e"/></g><path d="M54.6 582.6L58.6 586.7L54.6 590.8Z" fill="#fff" stroke="#8a8a8a" stroke-width="1"/><g transform="translate(68,597)"><path d="M7 9V0.5M5 2.5L7 0.5L9 2.5" stroke="#2a7cc8" stroke-width="1.1" fill="none"/><path d="M7 9L1 13M1 10.5V13H3.5" stroke="#3aa23a" stroke-width="1.1" fill="none"/><path d="M7 9L15 12M12.5 10.5L15 12L12.8 13.8" stroke="#e02a6a" stroke-width="1.1" fill="none"/></g><path d="M54.6 600.6L58.6 604.7L54.6 608.8Z" fill="#fff" stroke="#8a8a8a" stroke-width="1"/><g transform="translate(68,615)"><text x="0" y="7" font-size="7" font-weight="bold" fill="#b5256e" font-family="Liberation Sans">8.85</text><text x="0" y="15" font-size="7" font-weight="bold" fill="#b5256e" font-family="Liberation Sans">e-12</text></g><g transform="translate(68,633)"><rect x="1" y="1" width="14" height="14" fill="none" stroke="#b5256e" stroke-width="1.4"/><path d="M1 5.5H15M1 10H15M5.7 1V15M10.3 1V15" stroke="#b5256e" stroke-width="1.2"/></g><path d="M54.6 636.6L58.6 640.7L54.6 644.8Z" fill="#fff" stroke="#8a8a8a" stroke-width="1"/><g transform="translate(68,651)"><path d="M0.5 9Q4 1 8 8Q12 15 15.5 7" stroke="#b5256e" stroke-width="1.6" fill="none"/></g><path d="M53 661H59.5V654.5Z" fill="#111"/><g transform="translate(88,669)"><circle cx="8" cy="8" r="7.2" fill="#fff" stroke="#555" stroke-width="1"/><path d="M4 4V12H12" stroke="#555" stroke-width="0.9" fill="none"/><path d="M4.5 7Q7 6 8 9Q9 10 11.5 9" stroke="#b5256e" stroke-width="1" fill="none"/></g><g transform="translate(68,687)"><path d="M0.2 3.3L4.6 5.2V15.2L0.2 12.8Z" fill="#a51a62"/><path d="M5.4 5.2H15V15.2H5.4Z" fill="#b5256e"/><path d="M0.6 2.6L4.8 0.3H14.2L15 4.5H5.2Z" fill="#c0307c"/></g><path d="M53 697H59.5V690.5Z" fill="#111"/><g transform="translate(88,705)"><path d="M0.5 3.5H12.5V15.5H0.5Z" fill="none" stroke="#8f8f8f" stroke-width="0.9"/><path d="M3 0.5H15.5V12.5H12.5M3 0.5V3.5M15.5 0.5L12.5 3.5M0.5 3.5L3 0.5M12.5 15.5L15.5 12.5M0.5 15.5L3 12.5V3.5M3 12.5H12.5" stroke="#8f8f8f" stroke-width="0.7" fill="none" opacity="0.8"/><path d="M2.5 8.5H13.5" stroke="#b5256e" stroke-width="1.3"/><path d="M1.5 8.5L4.8 6.3V10.7Z M14.5 8.5L11.2 6.3V10.7Z" fill="#b5256e"/></g><g transform="translate(88,723)"><path d="M1 15V1M-0.3 2.4L1 0.8L2.3 2.4M1 14.8H15M13.6 13.5L15.2 14.8L13.6 16.1" stroke="#aaa" stroke-width="0.9" fill="none"/><path d="M2.5 13L7 4.5Q9.5 3.5 9 7L11 9.5Q10 12.5 7 11Z" fill="#c4c4c4" stroke="#aaa" stroke-width="0.6"/><path d="M12.3 0.40000000000000036V6.0M9.5 3.2H15.100000000000001M10.284 1.1840000000000002L14.316 5.216M14.316 1.1840000000000002L10.284 5.216" stroke="#aaa" stroke-width="0.9"/></g><g transform="translate(68,741)"><path d="M0.2 3.3L4.6 5.2V15.2L0.2 12.8Z" fill="#a51a62"/><path d="M5.4 5.2H15V15.2H5.4Z" fill="#b5256e"/><path d="M0.6 2.6L4.8 0.3H14.2L15 4.5H5.2Z" fill="#c0307c"/></g><path d="M53 751H59.5V744.5Z" fill="#111"/><g transform="translate(88,759)"><path d="M0.5 3.5H12.5V15.5H0.5Z" fill="none" stroke="#b8b8b8" stroke-width="0.9"/><path d="M3 0.5H15.5V12.5H12.5M3 0.5V3.5M15.5 0.5L12.5 3.5M0.5 3.5L3 0.5M12.5 15.5L15.5 12.5M0.5 15.5L3 12.5V3.5M3 12.5H12.5" stroke="#b8b8b8" stroke-width="0.7" fill="none" opacity="0.8"/><path d="M4.5 3.5V15.5M8.5 3.5V15.5" stroke="#c8c8c8" stroke-width="1.6"/><circle cx="12.3" cy="3.2" r="3.3" fill="#fff"/><path d="M12.3 0.40000000000000036V6.0M9.5 3.2H15.100000000000001M10.284 1.1840000000000002L14.316 5.216M14.316 1.1840000000000002L10.284 5.216" stroke="#aaa" stroke-width="0.9"/></g><g transform="translate(88,777)"><path d="M0.5 3.5H12.5V15.5H0.5Z" fill="none" stroke="#8f8f8f" stroke-width="0.9"/><path d="M3 0.5H15.5V12.5H12.5M3 0.5V3.5M15.5 0.5L12.5 3.5M0.5 3.5L3 0.5M12.5 15.5L15.5 12.5M0.5 15.5L3 12.5V3.5M3 12.5H12.5" stroke="#8f8f8f" stroke-width="0.7" fill="none" opacity="0.8"/><path d="M2.5 8.5H13.5" stroke="#b5256e" stroke-width="1.3"/><path d="M1.5 8.5L4.8 6.3V10.7Z M14.5 8.5L11.2 6.3V10.7Z" fill="#b5256e"/></g><g transform="translate(68,795)"><path d="M-0.5 9.5Q3 5 6 8.5Q9 12 13 8.5" stroke="#b5256e" stroke-width="1.3" fill="none"/><path d="M12.3 -0.20000000000000018V5.8M9.3 2.8H15.3M10.14 0.6399999999999997L14.46 4.96M14.46 0.6399999999999997L10.14 4.96" stroke="#333" stroke-width="0.9"/></g><path d="M54.6 798.6L58.6 802.7L54.6 806.8Z" fill="#fff" stroke="#8a8a8a" stroke-width="1"/><g transform="translate(68,813)"><circle cx="6.8" cy="8.7" r="6.9" fill="#fff" stroke="#777" stroke-width="1"/><circle cx="4.5" cy="9" r="2" fill="none" stroke="#b5256e" stroke-width="1"/><path d="M1 9H14M7.5 2Q11 6 7.5 15" stroke="#999" stroke-width="0.6" fill="none"/><circle cx="12.3" cy="3" r="3.6" fill="#fff"/><path d="M12.3 0.0V6.0M9.3 3H15.3M10.14 0.8399999999999999L14.46 5.16M14.46 0.8399999999999999L10.14 5.16" stroke="#333" stroke-width="0.9"/></g><path d="M54.6 816.6L58.6 820.7L54.6 824.8Z" fill="#fff" stroke="#8a8a8a" stroke-width="1"/><g transform="translate(68,831)"><circle cx="6.8" cy="8.7" r="6.9" fill="#fff" stroke="#777" stroke-width="1"/><path d="M3 12Q6 4 9 10Q11 13 13 6" stroke="#b5256e" stroke-width="1" fill="none"/><path d="M1 9H14M7.5 2V15" stroke="#999" stroke-width="0.5"/><circle cx="12.3" cy="3" r="3.6" fill="#fff"/><path d="M12.3 0.0V6.0M9.3 3H15.3M10.14 0.8399999999999999L14.46 5.16M14.46 0.8399999999999999L10.14 5.16" stroke="#333" stroke-width="0.9"/></g><path d="M54.6 834.6L58.6 838.7L54.6 842.8Z" fill="#fff" stroke="#8a8a8a" stroke-width="1"/><g transform="translate(68,849)"><rect x="1" y="3" width="13" height="13" fill="#b5256e"/><path d="M3 14L7 6L11 14" stroke="#fff" stroke-width="0.8" fill="none"/><circle cx="12.5" cy="3" r="3" fill="#f8f9fd"/><path d="M12.5 0.3999999999999999V5.6M9.9 3H15.1M10.628 1.1280000000000001L14.372 4.872M14.372 1.1280000000000001L10.628 4.872" stroke="#333" stroke-width="0.9"/></g><path d="M54.6 852.6L58.6 856.7L54.6 860.8Z" fill="#fff" stroke="#8a8a8a" stroke-width="1"/></svg></div>
<div class="t" style="left:578.60px;top:34.43px;font-size:15.2px;line-height:20px;color:#2f62b0;letter-spacing:-0.55px;-webkit-text-stroke:0.25px #f8f9fd">Arrow Volume</div>
<svg style="position:absolute;left:579px;top:58px;" width="16" height="13" viewBox="0 0 16 13"><rect x="0.5" y="0.5" width="15" height="12" fill="#fff" stroke="#777" stroke-width="1"/><path d="M0.5 2.5H15.5" stroke="#777" stroke-width="0.8"/><rect x="7" y="4" width="7" height="7" fill="#b0226c"/><circle cx="5" cy="7.5" r="3.7" fill="#b0226c"/><path d="M3 7.5H6.8M5.2 5.8L6.9 7.5L5.2 9.2" stroke="#fff" stroke-width="1.1" fill="none"/><circle cx="5" cy="7.5" r="3.7" fill="none" stroke="#fff" stroke-width="0.5"/></svg>
<div class="t" style="left:599.60px;top:53.47px;font-size:12.2px;line-height:20px;color:#000;">Plot</div>
<svg style="position:absolute;left:0px;top:0px;" width="720" height="75" viewBox="0 0 720 75"><rect x="627" y="59" width="2" height="9" fill="#b0226c"/><path d="M629.5 63.5L634 59V62.2H643V64.8H634V68Z" fill="#b0226c"/><path d="M650.5 63.5L655 59V62.2H665V64.8H655V68Z" fill="#b0226c"/><path d="M688 63.5L683.5 59V62.2H673.7V64.8H683.5V68Z" fill="#b0226c"/><rect x="710" y="59" width="2" height="9" fill="#b0226c"/><path d="M709.5 63.5L705 59V62.2H696V64.8H705V68Z" fill="#b0226c"/></svg>
<div style="position:absolute;left:910px;top:77px;width:17px;height:789px;background:#f0f0f0"></div>
<div style="position:absolute;left:910px;top:94px;width:17px;height:584px;background:#cdcdcd"></div>
<svg style="position:absolute;left:914px;top:82px;" width="10" height="6" viewBox="0 0 10 6"><path d="M1 5L5 1L9 5" stroke="#9a9a9a" stroke-width="1.05" fill="none"/></svg>
<svg style="position:absolute;left:914px;top:855px;" width="10" height="6" viewBox="0 0 10 6"><path d="M1 1L5 5L9 1" stroke="#9a9a9a" stroke-width="1.05" fill="none"/></svg>
<div style="position:absolute;left:0;top:0;width:910px;height:866px;overflow:hidden;clip-path:inset(76px 0 0 572px)"><div class="t" style="left:577.00px;top:87.65px;font-size:11.7px;line-height:20px;color:#000;">Label:</div><div style="position:absolute;left:618px;top:88px;width:258px;height:19px;box-sizing:border-box;border:1px solid #d0d0d0;background:#fff"></div><div class="t" style="left:621.00px;top:87.15px;font-size:11.7px;line-height:20px;color:#000;">Arrow Volume 1</div><div style="position:absolute;left:884px;top:86px;width:21px;height:23px;box-sizing:border-box;border:1px solid #b5b5b5;border-radius:2px;background:linear-gradient(#f4f4f4,#e6e6e6)"></div><svg style="position:absolute;left:885px;top:88px;" width="18" height="18" viewBox="0 0 18 18"><rect x="2.5" y="1.8" width="12.5" height="12.5" rx="1" fill="#f4f4f4" stroke="#555" stroke-width="1"/><rect x="2.5" y="1.8" width="12.5" height="2.4" fill="#555"/><path d="M6.8 7.2H13M6.8 9.6H13" stroke="#3a9a3a" stroke-width="1.1"/><path d="M1.5 15.8L5.2 12.2" stroke="#3a9a3a" stroke-width="1.5"/><path d="M2.5 10.8H6.3V14.5Z" fill="#3a9a3a"/></svg><div style="position:absolute;left:572px;top:118px;width:338px;height:25px;background:#dee7f3"></div><svg style="position:absolute;left:577px;top:128.0px;" width="9" height="6" viewBox="0 0 9 6"><path d="M0 0H9L4.5 5.5Z" fill="#555"/></svg><div class="t" style="left:598.00px;top:120.74px;font-size:12.3px;line-height:20px;color:#000;letter-spacing:0.4px">Data</div><div class="t" style="left:577.00px;top:153.45px;font-size:11.7px;line-height:20px;color:#000;">Dataset:</div><div style="position:absolute;left:629px;top:153px;width:247px;height:20px;box-sizing:border-box;border:1px solid #b2b2b2;border-radius:2px;background:linear-gradient(#efefef,#e5e5e5)"></div><div class="t" style="left:641.00px;top:153.15px;font-size:11.7px;line-height:20px;color:#000;letter-spacing:0.25px">From parent</div><svg style="position:absolute;left:862px;top:161.0px;" width="8" height="5" viewBox="0 0 8 5"><path d="M0 0H8L4 5Z" fill="#111"/></svg><div style="position:absolute;left:884px;top:152px;width:21px;height:23px;box-sizing:border-box;border:1px solid #b5b5b5;border-radius:2px;background:linear-gradient(#f4f4f4,#e6e6e6)"></div><svg style="position:absolute;left:885px;top:153px;" width="18" height="20" viewBox="0 0 18 20"><path d="M3 3.8H8M4.3 6.3H8M4.3 8.8H8M4.3 11.3H8M3 13.8H8.5" stroke="#444" stroke-width="1"/><path d="M9 14H14.5V7.5H11.5" stroke="#3a9a3a" stroke-width="1.2" fill="none"/><path d="M9.3 7.5L12 5V10Z" fill="#3a9a3a"/></svg><div style="position:absolute;left:572px;top:186px;width:338px;height:27px;background:#dee7f3"></div><svg style="position:absolute;left:577px;top:197.0px;" width="9" height="6" viewBox="0 0 9 6"><path d="M0 0H9L4.5 5.5Z" fill="#555"/></svg><div class="t" style="left:598.00px;top:189.74px;font-size:12.3px;line-height:20px;color:#000;letter-spacing:0.4px">Expression</div><svg style="position:absolute;left:0px;top:0px;" width="910" height="230" viewBox="0 0 910 230"><path d="M836.4 193.4V204.2M831 198.8H841.9" stroke="#3a78c0" stroke-width="2.6"/><path d="M850.5 197H858L854.2 201Z" fill="#222"/><path d="M873.2 192.7L881 196.2L873.2 198.8Z" fill="#3aa23a"/><path d="M881.7 198L873.2 201.6L881.7 205.2Z" fill="#e0207a"/><path d="M891.5 197H899L895.2 201Z" fill="#222"/></svg><div class="t" style="left:577.00px;top:220.75px;font-size:11.7px;line-height:20px;color:#000;">X component:</div><div style="position:absolute;left:577px;top:244px;width:295px;height:19px;box-sizing:border-box;border:1px solid #d0d0d0;background:#fff"></div><div class="t" style="left:580.00px;top:243.15px;font-size:11.7px;line-height:20px;color:#000;">emw.Ex</div><div class="t" style="left:881.50px;top:243.95px;font-size:11.7px;line-height:20px;color:#000;">V/m</div><div class="t" style="left:577.00px;top:266.85px;font-size:11.7px;line-height:20px;color:#000;">Y component:</div><div style="position:absolute;left:577px;top:290px;width:295px;height:19px;box-sizing:border-box;border:1px solid #d0d0d0;background:#fff"></div><div class="t" style="left:580.00px;top:289.15px;font-size:11.7px;line-height:20px;color:#000;">emw.Ey</div><div class="t" style="left:881.50px;top:289.95px;font-size:11.7px;line-height:20px;color:#000;">V/m</div><div class="t" style="left:577.00px;top:312.65px;font-size:11.7px;line-height:20px;color:#000;">Z component:</div><div style="position:absolute;left:577px;top:336px;width:295px;height:19px;box-sizing:border-box;border:1px solid #d0d0d0;background:#fff"></div><div class="t" style="left:580.00px;top:335.15px;font-size:11.7px;line-height:20px;color:#000;">emw.Ez</div><div class="t" style="left:881.50px;top:335.95px;font-size:11.7px;line-height:20px;color:#000;">V/m</div><div class="t" style="left:577.00px;top:360.65px;font-size:11.7px;line-height:20px;color:#000;">Description:</div><div style="position:absolute;left:651px;top:364px;width:14px;height:13px;box-sizing:border-box;border:1px solid #333;background:#fff"></div><div style="position:absolute;left:680px;top:361px;width:225px;height:19px;box-sizing:border-box;border:1px solid #dcdcdc;background:#f8f9fd"></div><div class="t" style="left:682.00px;top:360.15px;font-size:11.7px;line-height:20px;color:#8c8c8c;">Electric field</div><div style="position:absolute;left:572px;top:391px;width:338px;height:25px;background:#dee7f3"></div><svg style="position:absolute;left:577px;top:401.0px;" width="9" height="6" viewBox="0 0 9 6"><path d="M0 0H9L4.5 5.5Z" fill="#555"/></svg><div class="t" style="left:598.00px;top:393.74px;font-size:12.3px;line-height:20px;color:#000;letter-spacing:0.4px">Title</div><div class="t" style="left:577.00px;top:425.15px;font-size:11.7px;line-height:20px;color:#000;">Title type:</div><div style="position:absolute;left:638px;top:425px;width:267px;height:20px;box-sizing:border-box;border:1px solid #5aa6ec;border-radius:2px;background:#cde5f9"></div><div class="t" style="left:650.00px;top:425.15px;font-size:11.7px;line-height:20px;color:#000;letter-spacing:0.25px">Automatic</div><svg style="position:absolute;left:891px;top:433.0px;" width="8" height="5" viewBox="0 0 8 5"><path d="M0 0H8L4 5Z" fill="#111"/></svg><div style="position:absolute;left:572px;top:456px;width:338px;height:25px;background:#dee7f3"></div><svg style="position:absolute;left:577px;top:466.0px;" width="9" height="6" viewBox="0 0 9 6"><path d="M0 0H9L4.5 5.5Z" fill="#555"/></svg><div class="t" style="left:598.00px;top:458.74px;font-size:12.3px;line-height:20px;color:#000;letter-spacing:0.4px">Arrow Positioning</div><div class="t" style="left:577.00px;top:490.55px;font-size:11.7px;line-height:20px;color:#000;">Placement:</div><div style="position:absolute;left:662px;top:490px;width:243px;height:20px;box-sizing:border-box;border:1px solid #b2b2b2;border-radius:2px;background:linear-gradient(#efefef,#e5e5e5)"></div><div class="t" style="left:674.00px;top:490.15px;font-size:11.7px;line-height:20px;color:#000;letter-spacing:0.25px">Grid</div><svg style="position:absolute;left:891px;top:498.0px;" width="8" height="5" viewBox="0 0 8 5"><path d="M0 0H8L4 5Z" fill="#111"/></svg><div style="position:absolute;left:577px;top:524px;width:9px;height:1px;background:#d6d6d6"></div><div class="t" style="left:590.50px;top:514.45px;font-size:11.7px;line-height:20px;color:#000;">X grid points</div><div style="position:absolute;left:661px;top:524px;width:243px;height:1px;background:#d6d6d6"></div><div class="t" style="left:577.00px;top:539.15px;font-size:11.7px;line-height:20px;color:#000;">Entry method:</div><div style="position:absolute;left:662px;top:538px;width:243px;height:20px;box-sizing:border-box;border:1px solid #b2b2b2;border-radius:2px;background:linear-gradient(#efefef,#e5e5e5)"></div><div class="t" style="left:674.00px;top:538.15px;font-size:11.7px;line-height:20px;color:#000;letter-spacing:0.25px">Number of points</div><svg style="position:absolute;left:891px;top:546.0px;" width="8" height="5" viewBox="0 0 8 5"><path d="M0 0H8L4 5Z" fill="#111"/></svg><div class="t" style="left:577.00px;top:563.75px;font-size:11.7px;line-height:20px;color:#000;">Points:</div><div style="position:absolute;left:662px;top:564px;width:243px;height:19px;box-sizing:border-box;border:1px solid #d0d0d0;background:#fff"></div><div class="t" style="left:665.00px;top:563.15px;font-size:11.7px;line-height:20px;color:#000;">20</div><div style="position:absolute;left:577px;top:597px;width:9px;height:1px;background:#d6d6d6"></div><div class="t" style="left:590.50px;top:587.45px;font-size:11.7px;line-height:20px;color:#000;">Y grid points</div><div style="position:absolute;left:661px;top:597px;width:243px;height:1px;background:#d6d6d6"></div><div class="t" style="left:577.00px;top:611.15px;font-size:11.7px;line-height:20px;color:#000;">Entry method:</div><div style="position:absolute;left:662px;top:611px;width:243px;height:20px;box-sizing:border-box;border:1px solid #b2b2b2;border-radius:2px;background:linear-gradient(#efefef,#e5e5e5)"></div><div class="t" style="left:674.00px;top:611.15px;font-size:11.7px;line-height:20px;color:#000;letter-spacing:0.25px">Number of points</div><svg style="position:absolute;left:891px;top:619.0px;" width="8" height="5" viewBox="0 0 8 5"><path d="M0 0H8L4 5Z" fill="#111"/></svg><div class="t" style="left:577.00px;top:636.45px;font-size:11.7px;line-height:20px;color:#000;">Points:</div><div style="position:absolute;left:662px;top:637px;width:243px;height:19px;box-sizing:border-box;border:1px solid #d0d0d0;background:#fff"></div><div class="t" style="left:665.00px;top:636.15px;font-size:11.7px;line-height:20px;color:#000;">20</div><div style="position:absolute;left:577px;top:670px;width:9px;height:1px;background:#d6d6d6"></div><div class="t" style="left:590.50px;top:660.45px;font-size:11.7px;line-height:20px;color:#000;">Z grid points</div><div style="position:absolute;left:661px;top:670px;width:243px;height:1px;background:#d6d6d6"></div><div class="t" style="left:577.00px;top:684.55px;font-size:11.7px;line-height:20px;color:#000;">Entry method:</div><div style="position:absolute;left:662px;top:684px;width:243px;height:20px;box-sizing:border-box;border:1px solid #b2b2b2;border-radius:2px;background:linear-gradient(#efefef,#e5e5e5)"></div><div class="t" style="left:674.00px;top:684.15px;font-size:11.7px;line-height:20px;color:#000;letter-spacing:0.25px">Number of points</div><svg style="position:absolute;left:891px;top:692.0px;" width="8" height="5" viewBox="0 0 8 5"><path d="M0 0H8L4 5Z" fill="#111"/></svg><div class="t" style="left:577.00px;top:709.85px;font-size:11.7px;line-height:20px;color:#000;">Points:</div><div style="position:absolute;left:662px;top:710px;width:243px;height:19px;box-sizing:border-box;border:1px solid #d0d0d0;background:#fff"></div><div class="t" style="left:665.00px;top:709.15px;font-size:11.7px;line-height:20px;color:#000;">20</div><div style="position:absolute;left:572px;top:740px;width:338px;height:25px;background:#dee7f3"></div><svg style="position:absolute;left:577px;top:750.0px;" width="9" height="6" viewBox="0 0 9 6"><path d="M0 0H9L4.5 5.5Z" fill="#555"/></svg><div class="t" style="left:598.00px;top:742.74px;font-size:12.3px;line-height:20px;color:#000;letter-spacing:0.4px">Coloring and Style</div><div class="t" style="left:577.00px;top:774.15px;font-size:11.7px;line-height:20px;color:#000;">Arrow type:</div><div style="position:absolute;left:659px;top:774px;width:246px;height:20px;box-sizing:border-box;border:1px solid #b2b2b2;border-radius:2px;background:linear-gradient(#efefef,#e5e5e5)"></div><div class="t" style="left:671.00px;top:774.15px;font-size:11.7px;line-height:20px;color:#000;letter-spacing:0.25px">Arrow</div><svg style="position:absolute;left:891px;top:782.0px;" width="8" height="5" viewBox="0 0 8 5"><path d="M0 0H8L4 5Z" fill="#111"/></svg><div class="t" style="left:577.00px;top:800.55px;font-size:11.7px;line-height:20px;color:#000;">Arrow length:</div><div style="position:absolute;left:659px;top:800px;width:246px;height:20px;box-sizing:border-box;border:1px solid #b2b2b2;border-radius:2px;background:linear-gradient(#efefef,#e5e5e5)"></div><div class="t" style="left:671.00px;top:800.15px;font-size:11.7px;line-height:20px;color:#000;letter-spacing:0.25px">Proportional</div><svg style="position:absolute;left:891px;top:808.0px;" width="8" height="5" viewBox="0 0 8 5"><path d="M0 0H8L4 5Z" fill="#111"/></svg><div class="t" style="left:577.00px;top:826.35px;font-size:11.7px;line-height:20px;color:#000;">Arrow base:</div><div style="position:absolute;left:659px;top:826px;width:246px;height:20px;box-sizing:border-box;border:1px solid #b2b2b2;border-radius:2px;background:linear-gradient(#efefef,#e5e5e5)"></div><div class="t" style="left:671.00px;top:826.15px;font-size:11.7px;line-height:20px;color:#000;letter-spacing:0.25px">Tail</div><svg style="position:absolute;left:891px;top:834.0px;" width="8" height="5" viewBox="0 0 8 5"><path d="M0 0H8L4 5Z" fill="#111"/></svg><div class="t" style="left:577.00px;top:851.65px;font-size:11.7px;line-height:20px;color:#000;">Scale factor:</div><div style="position:absolute;left:660px;top:855px;width:14px;height:13px;box-sizing:border-box;border:1px solid #333;background:#fff"></div><svg style="position:absolute;left:661px;top:856px;" width="12" height="11" viewBox="0 0 12 11"><path d="M2 5.5L4.5 8.5L10 1.5" stroke="#111" stroke-width="1.6" fill="none"/></svg><div style="position:absolute;left:689px;top:852px;width:216px;height:19px;box-sizing:border-box;border:1px solid #d0d0d0;background:#fff"></div><div class="t" style="left:692.00px;top:851.15px;font-size:11.7px;line-height:20px;color:#000;">7.5E-4</div></div>
<div style="position:absolute;left:933px;top:-1px;width:975px;height:573px;box-sizing:border-box;border:1px solid #8cc3f5;background:#f8f9fd"></div>
<div class="t" style="left:941.00px;top:8.42px;font-size:21px;line-height:20px;color:#2a8ef0;letter-spacing:-1.2px;-webkit-text-stroke:0.4px #f8f9fd">Graphics</div>
<svg style="position:absolute;left:1888px;top:15px;" width="8" height="4" viewBox="0 0 8 4"><path d="M0 0H8L4 4Z" fill="#444"/></svg>
<div style="position:absolute;left:1903px;top:13px;width:3px;height:6px;background:#444"></div>
<div style="position:absolute;left:934px;top:57px;width:972px;height:514px;background:linear-gradient(#f8f9fd 0%,#f3f7fd 35%,#e6f1fd 100%)"></div>
<svg style="position:absolute;left:0px;top:0px;" width="1460" height="60" viewBox="0 0 1460 60"><circle cx="947.5" cy="40.5" r="4.6" fill="none" stroke="#2c4f7c" stroke-width="1.6"/><path d="M950.7 43.8L955.0 48" stroke="#2c4f7c" stroke-width="2.2"/><path d="M945.2 40.5H949.8" stroke="#2c4f7c" stroke-width="1.2"/><path d="M947.5 38.2V42.8" stroke="#2c4f7c" stroke-width="1.2"/><circle cx="970.5" cy="40.5" r="4.6" fill="none" stroke="#2c4f7c" stroke-width="1.6"/><path d="M973.7 43.8L978.0 48" stroke="#2c4f7c" stroke-width="2.2"/><path d="M968.2 40.5H972.8" stroke="#2c4f7c" stroke-width="1.2"/><rect x="987.5" y="40" width="7" height="7" fill="none" stroke="#2c4f7c" stroke-width="1" stroke-dasharray="1.5 1"/><circle cx="995.5" cy="40.5" r="4.6" fill="none" stroke="#2c4f7c" stroke-width="1.6"/><path d="M998.7 43.8L1003 48" stroke="#2c4f7c" stroke-width="2.2"/><path d="M993.2 40.5H997.8M995.5 38.2V42.8" stroke="#2c4f7c" stroke-width="1.1"/><path d="M1010.7 40H1018L1014.4 44Z" fill="#111"/><rect x="1029.5" y="34.5" width="14" height="14" fill="#fff" stroke="#555" stroke-width="1"/><path d="M1036.5 38V45M1033 41.5H1040" stroke="#555" stroke-width="1"/><path d="M1036.5 35.5L1038.5 37.5H1034.5Z M1036.5 47.5L1038.5 45.5H1034.5Z M1030.5 41.5L1032.5 39.5V43.5Z M1042.5 41.5L1040.5 39.5V43.5Z" fill="#3a7cc4"/><path d="M1052.5 34.5V49.5" stroke="#d0d0d0" stroke-width="1"/><path d="M1067 47V35M1065 37L1067 35L1069 37" stroke="#3a7cc4" stroke-width="1" fill="none"/><path d="M1067 47L1061 42M1061 44.5V42H1063.5" stroke="#3aa23a" stroke-width="1.1" fill="none"/><path d="M1067 47L1076 42.5M1073.5 42.2L1076 42.5L1074.8 44.8" stroke="#e02a6a" stroke-width="1.1" fill="none"/><path d="M1083.7 40H1091L1087.4 44Z" fill="#111"/><path d="M1104 47V35M1102.5 36.5L1104 35L1105.5 36.5" stroke="#3aa23a" stroke-width="1" fill="none"/><path d="M1104 47H1117M1115.5 45.5L1117 47L1115.5 48.5" stroke="#d92020" stroke-width="1" fill="none"/><text x="1106" y="43" font-size="9" fill="#555" font-family="Liberation Sans">xy</text><path d="M1127.5 47V35M1126.0 36.5L1127.5 35L1129.0 36.5" stroke="#2c4f7c" stroke-width="1" fill="none"/><path d="M1127.5 47H1140.5M1139.0 45.5L1140.5 47L1139.0 48.5" stroke="#3aa23a" stroke-width="1" fill="none"/><text x="1129.5" y="43" font-size="9" fill="#555" font-family="Liberation Sans">yz</text><path d="M1150 47V35M1148.5 36.5L1150 35L1151.5 36.5" stroke="#2c4f7c" stroke-width="1" fill="none"/><path d="M1150 47H1163M1161.5 45.5L1163 47L1161.5 48.5" stroke="#d92020" stroke-width="1" fill="none"/><text x="1152" y="43" font-size="9" fill="#555" font-family="Liberation Sans">xz</text><path d="M1172 37H1177V46H1172Z" fill="#3a7cc4"/><path d="M1177 39L1186 36V47L1177 44Z" fill="#3a7cc4"/><path d="M1180 38.5V44.5M1183 37.8V45.2" stroke="#cfe0f3" stroke-width="0.7"/><path d="M1194.5 34.5V49.5" stroke="#d0d0d0" stroke-width="1"/><path d="M1214 37.5A6 6 0 1 0 1216 43" stroke="#3a7cc4" stroke-width="1.4" fill="none"/><path d="M1210.5 34.5L1215.5 37.5L1211 40Z" fill="#3a7cc4"/><path d="M1224.8 40H1232.3L1228.5 44Z" fill="#111"/><path d="M1243.5 34.5V49.5" stroke="#d0d0d0" stroke-width="1"/><rect x="1250.5" y="33.5" width="17" height="17" rx="1.5" fill="#bcd8f4" stroke="#3a7cc4" stroke-width="1"/><path d="M1252 42L1262 36V48Z" fill="#3a7cc4"/><path d="M1258.5 39.5Q1261 42 1258.5 44.5" stroke="#fff" stroke-width="0.8" fill="none"/><rect x="1275" y="37" width="10" height="8" fill="#e8eef6" stroke="#8aa4c4" stroke-width="1"/><rect x="1278" y="40" width="11" height="8" fill="#dde6f0" stroke="#8aa4c4" stroke-width="1"/><rect x="1296.5" y="33.5" width="17" height="17" rx="1.5" fill="#cfe3f7" stroke="#2c4f7c" stroke-width="1.3"/><rect x="1298.5" y="35.5" width="13" height="13" fill="none" stroke="#6f8fb4" stroke-width="0.6"/><rect x="1319.5" y="33.5" width="17" height="17" rx="1.5" fill="#cfe3f7" stroke="#2c4f7c" stroke-width="1.3"/><rect x="1321.5" y="35.5" width="13" height="13" fill="none" stroke="#6f8fb4" stroke-width="0.6"/><rect x="1342.5" y="33.5" width="17" height="17" rx="1.5" fill="#cfe3f7" stroke="#2c4f7c" stroke-width="1.3"/><rect x="1344.5" y="35.5" width="13" height="13" fill="none" stroke="#6f8fb4" stroke-width="0.6"/><path d="M1305 46V37.5M1303.5 39L1305 37.5L1306.5 39" stroke="#3a7cc4" stroke-width="1" fill="none"/><path d="M1305 46L1300 43" stroke="#3aa23a" stroke-width="1"/><path d="M1305 46L1311 43" stroke="#e02a6a" stroke-width="1"/><rect x="1322.5" y="36.5" width="12" height="11" fill="#2f5f9e"/><rect x="1323.5" y="37.5" width="2.6" height="2.3" fill="#fff"/><rect x="1323.5" y="40.9" width="2.6" height="2.3" fill="#fff"/><rect x="1323.5" y="44.3" width="2.6" height="2.3" fill="#fff"/><rect x="1327.2" y="37.5" width="2.6" height="2.3" fill="#fff"/><rect x="1327.2" y="40.9" width="2.6" height="2.3" fill="#fff"/><rect x="1327.2" y="44.3" width="2.6" height="2.3" fill="#fff"/><rect x="1330.9" y="37.5" width="2.6" height="2.3" fill="#fff"/><rect x="1330.9" y="40.9" width="2.6" height="2.3" fill="#fff"/><rect x="1330.9" y="44.3" width="2.6" height="2.3" fill="#fff"/><defs><linearGradient id="cl" x1="0" y1="0" x2="0" y2="1"><stop offset="0" stop-color="#f0d040"/><stop offset="0.5" stop-color="#f07020"/><stop offset="1" stop-color="#d01010"/></linearGradient></defs><rect x="1353.5" y="36.5" width="3" height="12" fill="url(#cl)"/><circle cx="1374" cy="42" r="5.6" fill="none" stroke="#3a7cc4" stroke-width="3.4" stroke-dasharray="4.2 1.66"/><circle cx="1374" cy="42" r="2.2" fill="#f8f9fd"/><path d="M1390 40H1397.4L1393.7 44Z" fill="#111"/><rect x="1408" y="38" width="16" height="10" rx="1" fill="#3a7cc4"/><rect x="1412" y="36" width="5" height="3" fill="#3a7cc4"/><circle cx="1416" cy="43" r="2.8" fill="#fff"/><circle cx="1416" cy="43" r="1.6" fill="#3a7cc4"/><rect x="1434.5" y="34.5" width="9" height="5" fill="#fff" stroke="#3a7cc4" stroke-width="1.2"/><rect x="1432" y="39" width="14" height="7" rx="1" fill="#3a7cc4"/><rect x="1434.5" y="45" width="9" height="4" fill="#fff" stroke="#3a7cc4" stroke-width="1.2"/><rect x="1441" y="42" width="1.2" height="1.2" fill="#fff"/><rect x="1443" y="42" width="1.2" height="1.2" fill="#fff"/></svg>
<svg style="position:absolute;left:0px;top:0px;clip-path:inset(57px 0 0 934px)" width="1906" height="571" viewBox="0 0 1906 571"><path d="M1190 98L1600.8 129.3" stroke="#8a8a8a" stroke-width="0.9"/><path d="M1140 121.5L1538 150.2" stroke="#8a8a8a" stroke-width="0.9"/><path d="M1093.5 142.6L1479.3 169.8" stroke="#8a8a8a" stroke-width="0.9"/><path d="M1130.6 153.6L1268.8 93.6" stroke="#8a8a8a" stroke-width="0.9"/><path d="M1288 156.6L1421.5 105.9" stroke="#8a8a8a" stroke-width="0.9"/><path d="M1410.2 172L1570.4 117.2" stroke="#8a8a8a" stroke-width="0.9"/><path d="M1125.3 173.8L1117.5 571" stroke="#8a8a8a" stroke-width="0.9"/><path d="M1265 183.3L1258 571" stroke="#8a8a8a" stroke-width="0.9"/><path d="M1400.6 192.7L1395 571" stroke="#8a8a8a" stroke-width="0.9"/><path d="M1495 188.4L1491 571" stroke="#8a8a8a" stroke-width="0.9"/><path d="M1553.5 169.5L1550 571" stroke="#8a8a8a" stroke-width="0.9"/><path d="M1617.7 149.4L1613 571" stroke="#8a8a8a" stroke-width="0.9"/><path d="M1069.7 225.6L1450.4 249.3" stroke="#8a8a8a" stroke-width="0.9"/><path d="M1067 374L1447 392.6" stroke="#8a8a8a" stroke-width="0.9"/><path d="M1063 524L1447 537" stroke="#8a8a8a" stroke-width="0.9"/><path d="M1473 248.3L1642.3 200.5" stroke="#8a8a8a" stroke-width="0.9"/><path d="M1470 391.4L1641.4 360" stroke="#8a8a8a" stroke-width="0.9"/><path d="M1470 537L1638.6 520" stroke="#8a8a8a" stroke-width="0.9"/><ellipse cx="1336.4" cy="368.3" rx="198.4" ry="212.4" transform="rotate(-12.3 1336.4 368.3)" fill="none" stroke="#111" stroke-width="1.1"/><ellipse cx="1335.5" cy="366.3" rx="186.5" ry="200.8" transform="rotate(-12.9 1335.5 366.3)" fill="none" stroke="#111" stroke-width="1.1"/><path d="M1341.5 155.2A84.1 220.3 3.6 0 0 1320 578" stroke="#111" stroke-width="1" fill="none"/><path d="M1341.5 167.5A82.5 206.4 3.8 0 0 1337.4 566" stroke="#111" stroke-width="1" fill="none"/><path d="M1334 570A78 207 0 0 0 1419 380" stroke="#111" stroke-width="1" fill="none"/><path d="M1357 568A80 200 0 0 0 1426 390" stroke="#111" stroke-width="1" fill="none"/><path d="M1341.5 154.6V167" stroke="#111" stroke-width="1"/><ellipse cx="1311.5" cy="362.0" rx="7.5" ry="43.0" transform="rotate(2.5 1311.5 362.0)" fill="none" stroke="#000" stroke-width="1.1"/><ellipse cx="1311.0" cy="362.1" rx="9.1" ry="45.9" transform="rotate(2.5 1311.0 362.1)" fill="none" stroke="#000" stroke-width="1.1"/><ellipse cx="1310.5" cy="362.3" rx="10.6" ry="48.8" transform="rotate(2.5 1310.5 362.3)" fill="none" stroke="#000" stroke-width="1.2"/><ellipse cx="1310.0" cy="362.4" rx="11.8" ry="51.0" transform="rotate(2.5 1310.0 362.4)" fill="none" stroke="#000" stroke-width="1.3"/><ellipse cx="1309.7" cy="362.5" rx="12.9" ry="53.0" transform="rotate(2.5 1309.7 362.5)" fill="none" stroke="#000" stroke-width="1.3"/><ellipse cx="1309.3" cy="362.6" rx="13.9" ry="55.0" transform="rotate(2.5 1309.3 362.6)" fill="none" stroke="#000" stroke-width="1.3"/><ellipse cx="1309.0" cy="362.7" rx="15.0" ry="56.9" transform="rotate(2.5 1309.0 362.7)" fill="none" stroke="#000" stroke-width="1.3"/><ellipse cx="1308.6" cy="362.8" rx="16.0" ry="58.9" transform="rotate(2.5 1308.6 362.8)" fill="none" stroke="#000" stroke-width="1.3"/><ellipse cx="1308.2" cy="362.9" rx="17.1" ry="60.8" transform="rotate(2.5 1308.2 362.9)" fill="none" stroke="#000" stroke-width="1.3"/><ellipse cx="1307.9" cy="363.0" rx="18.1" ry="62.8" transform="rotate(2.5 1307.9 363.0)" fill="none" stroke="#000" stroke-width="1.3"/><ellipse cx="1307.5" cy="363.1" rx="19.2" ry="64.7" transform="rotate(2.5 1307.5 363.1)" fill="none" stroke="#000" stroke-width="1.3"/><ellipse cx="1307.2" cy="363.2" rx="20.3" ry="66.7" transform="rotate(2.5 1307.2 363.2)" fill="none" stroke="#000" stroke-width="1.3"/><ellipse cx="1306.8" cy="363.3" rx="21.3" ry="68.6" transform="rotate(2.5 1306.8 363.3)" fill="none" stroke="#000" stroke-width="1.3"/><ellipse cx="1306.5" cy="363.4" rx="22.4" ry="70.6" transform="rotate(2.5 1306.5 363.4)" fill="none" stroke="#000" stroke-width="1.3"/><ellipse cx="1306.1" cy="363.5" rx="23.4" ry="72.5" transform="rotate(2.5 1306.1 363.5)" fill="none" stroke="#000" stroke-width="1.3"/><ellipse cx="1305.8" cy="363.6" rx="24.5" ry="74.4" transform="rotate(2.5 1305.8 363.6)" fill="none" stroke="#000" stroke-width="1.3"/><ellipse cx="1305.4" cy="363.7" rx="25.5" ry="76.4" transform="rotate(2.5 1305.4 363.7)" fill="none" stroke="#000" stroke-width="1.3"/><ellipse cx="1305.0" cy="363.8" rx="26.6" ry="78.4" transform="rotate(2.5 1305.0 363.8)" fill="none" stroke="#000" stroke-width="1.3"/><ellipse cx="1304.7" cy="363.9" rx="27.6" ry="80.3" transform="rotate(2.5 1304.7 363.9)" fill="none" stroke="#000" stroke-width="1.3"/><ellipse cx="1304.3" cy="364.0" rx="28.7" ry="82.2" transform="rotate(2.5 1304.3 364.0)" fill="none" stroke="#000" stroke-width="1.3"/><ellipse cx="1304.0" cy="364.1" rx="29.7" ry="84.2" transform="rotate(2.5 1304.0 364.1)" fill="none" stroke="#000" stroke-width="1.3"/><ellipse cx="1303.6" cy="364.3" rx="30.8" ry="86.2" transform="rotate(2.5 1303.6 364.3)" fill="none" stroke="#000" stroke-width="1.3"/><ellipse cx="1303.3" cy="364.4" rx="31.8" ry="88.1" transform="rotate(2.5 1303.3 364.4)" fill="none" stroke="#000" stroke-width="1.3"/><ellipse cx="1302.9" cy="364.5" rx="32.9" ry="90.1" transform="rotate(2.5 1302.9 364.5)" fill="none" stroke="#000" stroke-width="1.3"/><ellipse cx="1302.6" cy="364.6" rx="33.9" ry="92.0" transform="rotate(2.5 1302.6 364.6)" fill="none" stroke="#000" stroke-width="1.3"/><ellipse cx="1302.2" cy="364.7" rx="35.0" ry="94.0" transform="rotate(2.5 1302.2 364.7)" fill="none" stroke="#000" stroke-width="1.3"/><ellipse cx="1301.8" cy="364.8" rx="36.0" ry="95.9" transform="rotate(2.5 1301.8 364.8)" fill="none" stroke="#000" stroke-width="1.3"/><ellipse cx="1301.4" cy="364.9" rx="37.3" ry="98.2" transform="rotate(2.5 1301.4 364.9)" fill="none" stroke="#000" stroke-width="1.1"/><ellipse cx="1301.0" cy="365.0" rx="38.5" ry="100.5" transform="rotate(2.5 1301.0 365.0)" fill="none" stroke="#000" stroke-width="1.1"/><ellipse cx="1371.0" cy="369.5" rx="10.0" ry="45.5" transform="rotate(0 1371.0 369.5)" fill="none" stroke="#000" stroke-width="1.1"/><ellipse cx="1371.4" cy="369.5" rx="11.6" ry="48.2" transform="rotate(0 1371.4 369.5)" fill="none" stroke="#000" stroke-width="1.1"/><ellipse cx="1371.8" cy="369.4" rx="13.2" ry="50.9" transform="rotate(0 1371.8 369.4)" fill="none" stroke="#000" stroke-width="1.2"/><ellipse cx="1372.1" cy="369.4" rx="14.5" ry="53.0" transform="rotate(0 1372.1 369.4)" fill="none" stroke="#000" stroke-width="1.3"/><ellipse cx="1372.4" cy="369.4" rx="15.6" ry="54.8" transform="rotate(0 1372.4 369.4)" fill="none" stroke="#000" stroke-width="1.3"/><ellipse cx="1372.7" cy="369.4" rx="16.7" ry="56.6" transform="rotate(0 1372.7 369.4)" fill="none" stroke="#000" stroke-width="1.3"/><ellipse cx="1372.9" cy="369.4" rx="17.7" ry="58.4" transform="rotate(0 1372.9 369.4)" fill="none" stroke="#000" stroke-width="1.3"/><ellipse cx="1373.2" cy="369.4" rx="18.8" ry="60.2" transform="rotate(0 1373.2 369.4)" fill="none" stroke="#000" stroke-width="1.3"/><ellipse cx="1373.5" cy="369.3" rx="19.9" ry="62.1" transform="rotate(0 1373.5 369.3)" fill="none" stroke="#000" stroke-width="1.3"/><ellipse cx="1373.7" cy="369.3" rx="21.0" ry="63.9" transform="rotate(0 1373.7 369.3)" fill="none" stroke="#000" stroke-width="1.3"/><ellipse cx="1374.0" cy="369.3" rx="22.1" ry="65.7" transform="rotate(0 1374.0 369.3)" fill="none" stroke="#000" stroke-width="1.3"/><ellipse cx="1374.3" cy="369.3" rx="23.2" ry="67.5" transform="rotate(0 1374.3 369.3)" fill="none" stroke="#000" stroke-width="1.3"/><ellipse cx="1374.6" cy="369.3" rx="24.2" ry="69.3" transform="rotate(0 1374.6 369.3)" fill="none" stroke="#000" stroke-width="1.3"/><ellipse cx="1374.8" cy="369.3" rx="25.3" ry="71.1" transform="rotate(0 1374.8 369.3)" fill="none" stroke="#000" stroke-width="1.3"/><ellipse cx="1375.1" cy="369.2" rx="26.4" ry="72.9" transform="rotate(0 1375.1 369.2)" fill="none" stroke="#000" stroke-width="1.3"/><ellipse cx="1375.4" cy="369.2" rx="27.5" ry="74.8" transform="rotate(0 1375.4 369.2)" fill="none" stroke="#000" stroke-width="1.3"/><ellipse cx="1375.6" cy="369.2" rx="28.6" ry="76.6" transform="rotate(0 1375.6 369.2)" fill="none" stroke="#000" stroke-width="1.3"/><ellipse cx="1375.9" cy="369.2" rx="29.7" ry="78.4" transform="rotate(0 1375.9 369.2)" fill="none" stroke="#000" stroke-width="1.3"/><ellipse cx="1376.2" cy="369.2" rx="30.8" ry="80.2" transform="rotate(0 1376.2 369.2)" fill="none" stroke="#000" stroke-width="1.3"/><ellipse cx="1376.5" cy="369.2" rx="31.8" ry="82.0" transform="rotate(0 1376.5 369.2)" fill="none" stroke="#000" stroke-width="1.3"/><ellipse cx="1376.7" cy="369.1" rx="32.9" ry="83.8" transform="rotate(0 1376.7 369.1)" fill="none" stroke="#000" stroke-width="1.3"/><ellipse cx="1377.0" cy="369.1" rx="34.0" ry="85.6" transform="rotate(0 1377.0 369.1)" fill="none" stroke="#000" stroke-width="1.3"/><ellipse cx="1377.3" cy="369.1" rx="35.1" ry="87.5" transform="rotate(0 1377.3 369.1)" fill="none" stroke="#000" stroke-width="1.3"/><ellipse cx="1377.5" cy="369.1" rx="36.2" ry="89.3" transform="rotate(0 1377.5 369.1)" fill="none" stroke="#000" stroke-width="1.3"/><ellipse cx="1377.8" cy="369.1" rx="37.3" ry="91.1" transform="rotate(0 1377.8 369.1)" fill="none" stroke="#000" stroke-width="1.3"/><ellipse cx="1378.1" cy="369.1" rx="38.4" ry="92.9" transform="rotate(0 1378.1 369.1)" fill="none" stroke="#000" stroke-width="1.3"/><ellipse cx="1378.4" cy="369.0" rx="39.4" ry="94.7" transform="rotate(0 1378.4 369.0)" fill="none" stroke="#000" stroke-width="1.3"/><ellipse cx="1378.7" cy="369.0" rx="40.7" ry="96.9" transform="rotate(0 1378.7 369.0)" fill="none" stroke="#000" stroke-width="1.1"/><ellipse cx="1379.0" cy="369.0" rx="42.0" ry="99.0" transform="rotate(0 1379.0 369.0)" fill="none" stroke="#000" stroke-width="1.1"/><path d="M1352 284V193L1360 191V284" fill="#fff" stroke="#111" stroke-width="1"/><path d="M1355.5 192.5V284" stroke="#111" stroke-width="0.7"/><path d="M1349 284H1362V292H1346Z" fill="#fff" stroke="#111" stroke-width="1"/><ellipse cx="1338.8" cy="364" rx="213.8" ry="19.5" transform="rotate(0.9 1338.8 364)" fill="none" stroke="#111" stroke-width="1.1"/><ellipse cx="1339" cy="365" rx="201" ry="17" transform="rotate(0.9 1339 365)" fill="none" stroke="#111" stroke-width="1.1"/><path d="M1286.6 193.0L1280.8 220.4" stroke="#e8000b" stroke-width="4.5" stroke-linecap="round"/><path d="M1276.6 240.0L1272.4 218.7L1289.1 222.2Z" fill="#e8000b"/><circle cx="1280.8" cy="220.4" r="7.2" fill="#e8000b"/><path d="M1261.0 184.0L1257.9 192.4" stroke="#e8000b" stroke-width="2.2" stroke-linecap="round"/><path d="M1255.5 199.0L1254.2 191.1L1261.7 193.8Z" fill="#e8000b"/><circle cx="1257.9" cy="192.4" r="3.4" fill="#e8000b"/><path d="M1398.6 194.0L1380.1 216.7" stroke="#e8000b" stroke-width="3" stroke-linecap="round"/><path d="M1372.5 226.0L1375.8 213.2L1384.3 220.2Z" fill="#e8000b"/><circle cx="1380.1" cy="216.7" r="4.7" fill="#e8000b"/><path d="M1447.0 214.0L1437.6 227.4" stroke="#e8000b" stroke-width="2" stroke-linecap="round"/><path d="M1433.0 234.0L1434.5 225.3L1440.7 229.6Z" fill="#e8000b"/><circle cx="1437.6" cy="227.4" r="3.2" fill="#e8000b"/><path d="M1421.0 243.0L1405.9 258.1" stroke="#e8000b" stroke-width="1.6" stroke-linecap="round"/><path d="M1401.0 263.0L1403.7 255.8L1408.2 260.3Z" fill="#e8000b"/><path d="M1441.0 263.0L1426.5 269.1" stroke="#e8000b" stroke-width="1.3" stroke-linecap="round"/><path d="M1421.0 271.4L1425.4 266.5L1427.6 271.7Z" fill="#e8000b"/><path d="M1477.0 347.0L1492.0 346.0" stroke="#e8000b" stroke-width="1.6" stroke-linecap="round"/><path d="M1499.0 345.6L1492.2 349.0L1491.8 343.1Z" fill="#e8000b"/><path d="M1510.0 368.6L1515.0 395.8" stroke="#e8000b" stroke-width="1.6" stroke-linecap="round"/><path d="M1516.4 403.7L1512.0 396.4L1517.9 395.3Z" fill="#e8000b"/><path d="M1477.0 388.0L1477.0 408.0" stroke="#e8000b" stroke-width="1.5" stroke-linecap="round"/><path d="M1477.0 416.0L1474.0 408.0L1480.0 408.0Z" fill="#e8000b"/><path d="M1532.0 375.0L1532.6 385.0" stroke="#e8000b" stroke-width="1.2" stroke-linecap="round"/><path d="M1533.0 391.0L1530.1 385.2L1535.1 384.9Z" fill="#e8000b"/><path d="M1434.7 430.4L1424.7 447.1" stroke="#e8000b" stroke-width="1.8" stroke-linecap="round"/><path d="M1420.6 454.0L1421.7 445.3L1427.7 448.9Z" fill="#e8000b"/><path d="M1373.4 427.0L1373.4 441.0" stroke="#e8000b" stroke-width="1.8" stroke-linecap="round"/><path d="M1373.4 449.0L1369.9 441.0L1376.9 441.0Z" fill="#e8000b"/><path d="M1385.2 474.4L1382.7 487.7" stroke="#e8000b" stroke-width="2" stroke-linecap="round"/><path d="M1381.2 495.6L1379.0 487.1L1386.3 488.4Z" fill="#e8000b"/><circle cx="1382.7" cy="487.7" r="3.1" fill="#e8000b"/><path d="M1406.0 474.8L1400.9 489.9" stroke="#e8000b" stroke-width="2" stroke-linecap="round"/><path d="M1398.0 498.4L1397.1 488.6L1404.7 491.2Z" fill="#e8000b"/><circle cx="1400.9" cy="489.9" r="3.4" fill="#e8000b"/><path d="M1357.2 492.8L1371.3 506.6" stroke="#e8000b" stroke-width="2.8" stroke-linecap="round"/><path d="M1378.4 513.6L1368.1 509.8L1374.4 503.4Z" fill="#e8000b"/><circle cx="1371.3" cy="506.6" r="3.8" fill="#e8000b"/><path d="M1418.4 499.2L1413.5 507.3" stroke="#e8000b" stroke-width="1.4" stroke-linecap="round"/><path d="M1410.4 512.4L1411.2 505.9L1415.8 508.7Z" fill="#e8000b"/><circle cx="1413.5" cy="507.3" r="2.3" fill="#e8000b"/><path d="M1307.4 496.4L1301.3 509.5" stroke="#e8000b" stroke-width="1.5" stroke-linecap="round"/><path d="M1298.0 516.8L1298.4 508.2L1304.3 510.9Z" fill="#e8000b"/><path d="M1282.3 358.0L1272.3 374.3" stroke="#e8000b" stroke-width="1.5" stroke-linecap="round"/><path d="M1268.6 380.3L1269.7 372.8L1274.8 375.9Z" fill="#e8000b"/><path d="M1253.7 380.9L1244.6 391.6" stroke="#e8000b" stroke-width="1.4" stroke-linecap="round"/><path d="M1240.0 396.9L1242.3 389.6L1246.8 393.5Z" fill="#e8000b"/><path d="M1176.6 383.7L1184.1 374.8" stroke="#e8000b" stroke-width="1.5" stroke-linecap="round"/><path d="M1188.6 369.4L1186.4 376.7L1181.8 372.8Z" fill="#e8000b"/><path d="M1177.1 363.1L1183.5 358.0" stroke="#e8000b" stroke-width="1.2" stroke-linecap="round"/><path d="M1187.4 354.9L1185.0 359.9L1182.0 356.1Z" fill="#e8000b"/><path d="M1150.3 356.3L1157.3 355.8" stroke="#e8000b" stroke-width="1.2" stroke-linecap="round"/><path d="M1162.3 355.4L1157.5 358.1L1157.1 353.5Z" fill="#e8000b"/><path d="M1164.6 339.0L1170.4 337.4" stroke="#e8000b" stroke-width="1.1" stroke-linecap="round"/><path d="M1174.3 336.3L1171.0 339.5L1169.9 335.3Z" fill="#e8000b"/><path d="M1213.0 376.9L1220.9 380.0" stroke="#e8000b" stroke-width="1.1" stroke-linecap="round"/><path d="M1224.6 381.4L1220.1 382.0L1221.7 377.9Z" fill="#e8000b"/><path d="M1162.9 402.0L1167.6 394.8" stroke="#e8000b" stroke-width="1.6" stroke-linecap="round"/><path d="M1171.4 388.9L1170.3 396.5L1164.9 393.0Z" fill="#e8000b"/><path d="M1209.1 407.7L1217.0 400.9" stroke="#e8000b" stroke-width="1.4" stroke-linecap="round"/><path d="M1222.3 396.3L1218.8 403.0L1215.2 398.8Z" fill="#e8000b"/><path d="M1332.6 380.0L1330.5 391.5" stroke="#e8000b" stroke-width="1.2" stroke-linecap="round"/><path d="M1329.4 397.4L1328.2 391.1L1332.7 391.9Z" fill="#e8000b"/><path d="M1247.7 449.3L1247.7 444.0" stroke="#e8000b" stroke-width="1.2" stroke-linecap="round"/><path d="M1247.7 438.0L1250.0 444.0L1245.4 444.0Z" fill="#e8000b"/><path d="M1323.0 245.0L1327.5 252.8" stroke="#e8000b" stroke-width="1.3" stroke-linecap="round"/><path d="M1330.5 258.0L1325.2 254.1L1329.8 251.5Z" fill="#e8000b"/><path d="M1360.7 268.0L1363.7 271.3" stroke="#e8000b" stroke-width="1.1" stroke-linecap="round"/><path d="M1367.0 275.0L1362.0 272.8L1365.3 269.8Z" fill="#e8000b"/><circle cx="1191" cy="237" r="3.3" fill="#e8000b"/><path d="M1191 237L1198 230" stroke="#e8000b" stroke-width="1.5"/><circle cx="1203" cy="226" r="2.4" fill="#e8000b"/><path d="M1206 219L1208 232" stroke="#e8000b" stroke-width="1"/><path d="M1266.3 229.6L1265.0 227.8" stroke="#e8000b" stroke-width="1"/><path d="M1162.6 370.4L1166.0 371.3" stroke="#e8000b" stroke-width="1"/><path d="M1305.6 496.6L1307.5 498.6" stroke="#e8000b" stroke-width="1"/><path d="M1384.7 544.3L1381.7 542.8" stroke="#e8000b" stroke-width="1"/><path d="M1474.8 284.4L1476.3 286.3" stroke="#e8000b" stroke-width="1"/><path d="M1260.3 492.4L1261.1 494.0" stroke="#e8000b" stroke-width="0.9" stroke-linecap="round"/><path d="M1262.0 496.0L1259.9 494.6L1262.3 493.5Z" fill="#e8000b"/><path d="M1353.6 194.8L1356.2 195.8" stroke="#e8000b" stroke-width="1"/><path d="M1262.5 401.3L1259.6 402.2" stroke="#e8000b" stroke-width="1"/><path d="M1449.8 446.1L1449.9 447.9" stroke="#e8000b" stroke-width="0.9" stroke-linecap="round"/><path d="M1450.0 450.1L1448.6 448.0L1451.2 447.9Z" fill="#e8000b"/><path d="M1344.8 515.7L1344.4 512.7" stroke="#e8000b" stroke-width="1"/><path d="M1303.1 469.1L1305.2 472.1" stroke="#e8000b" stroke-width="1"/><path d="M1155.3 433.9L1155.5 432.1" stroke="#e8000b" stroke-width="0.9" stroke-linecap="round"/><path d="M1155.7 430.0L1156.8 432.3L1154.2 432.0Z" fill="#e8000b"/><path d="M1481.4 293.9L1480.8 292.2" stroke="#e8000b" stroke-width="0.9" stroke-linecap="round"/><path d="M1480.1 290.1L1482.0 291.7L1479.6 292.6Z" fill="#e8000b"/><path d="M1163.7 447.1L1161.7 444.5" stroke="#e8000b" stroke-width="0.9" stroke-linecap="round"/><path d="M1160.4 442.7L1162.7 443.7L1160.7 445.3Z" fill="#e8000b"/><path d="M1460.6 282.4L1458.9 283.8" stroke="#e8000b" stroke-width="0.9" stroke-linecap="round"/><path d="M1457.3 285.3L1458.1 282.8L1459.8 284.8Z" fill="#e8000b"/><path d="M1148.8 352.4L1150.0 354.5" stroke="#e8000b" stroke-width="1"/><path d="M1190.4 267.8L1188.2 269.6" stroke="#e8000b" stroke-width="0.9" stroke-linecap="round"/><path d="M1186.5 271.0L1187.4 268.6L1189.1 270.6Z" fill="#e8000b"/><path d="M1171.4 347.4L1168.7 346.5" stroke="#e8000b" stroke-width="0.9" stroke-linecap="round"/><path d="M1166.6 345.9L1169.1 345.3L1168.3 347.8Z" fill="#e8000b"/><path d="M1459.5 511.3L1458.9 514.7" stroke="#e8000b" stroke-width="1"/><path d="M1279.9 519.3L1282.4 518.6" stroke="#e8000b" stroke-width="1"/><path d="M1208.7 261.6L1209.1 265.3" stroke="#e8000b" stroke-width="1"/><path d="M1141.6 335.5L1138.9 338.4" stroke="#e8000b" stroke-width="1"/><path d="M1511.7 442.7L1509.8 442.6" stroke="#e8000b" stroke-width="0.9" stroke-linecap="round"/><path d="M1507.6 442.3L1509.9 441.3L1509.6 443.8Z" fill="#e8000b"/><path d="M1403.7 191.3L1405.8 189.8" stroke="#e8000b" stroke-width="0.9" stroke-linecap="round"/><path d="M1407.5 188.5L1406.5 190.9L1405.0 188.8Z" fill="#e8000b"/><path d="M1481.1 485.2L1478.4 487.3" stroke="#e8000b" stroke-width="1"/><path d="M1180.4 420.5L1182.4 421.4" stroke="#e8000b" stroke-width="1"/><path d="M1221.4 234.1L1220.2 236.0" stroke="#e8000b" stroke-width="1"/><path d="M1179.6 313.6L1182.4 314.1" stroke="#e8000b" stroke-width="0.9" stroke-linecap="round"/><path d="M1184.6 314.4L1182.2 315.4L1182.6 312.8Z" fill="#e8000b"/><path d="M1379.5 228.7L1379.4 231.9" stroke="#e8000b" stroke-width="1"/><path d="M1282.0 218.5L1283.9 215.9" stroke="#e8000b" stroke-width="0.9" stroke-linecap="round"/><path d="M1285.2 214.1L1285.0 216.6L1282.9 215.1Z" fill="#e8000b"/><path d="M1463.3 233.8L1466.3 234.2" stroke="#e8000b" stroke-width="0.9" stroke-linecap="round"/><path d="M1468.5 234.5L1466.2 235.5L1466.5 232.9Z" fill="#e8000b"/><path d="M1346.0 227.9L1344.0 227.3" stroke="#e8000b" stroke-width="1"/><path d="M1346.0 556.5L1347.4 554.8" stroke="#e8000b" stroke-width="0.9" stroke-linecap="round"/><path d="M1348.9 553.1L1348.4 555.7L1346.4 554.0Z" fill="#e8000b"/><path d="M1241.8 314.8L1243.1 317.0" stroke="#e8000b" stroke-width="0.9" stroke-linecap="round"/><path d="M1244.2 318.9L1242.0 317.7L1244.2 316.4Z" fill="#e8000b"/><path d="M1347.7 477.7L1346.4 480.2" stroke="#e8000b" stroke-width="1"/><path d="M1472.5 488.4L1473.5 486.2" stroke="#e8000b" stroke-width="0.9" stroke-linecap="round"/><path d="M1474.4 484.2L1474.7 486.8L1472.3 485.7Z" fill="#e8000b"/><path d="M1228.4 374.5L1227.1 376.1" stroke="#e8000b" stroke-width="1"/><path d="M1241.1 443.5L1244.5 442.6" stroke="#e8000b" stroke-width="1"/><path d="M1512.5 314.0L1513.0 316.8" stroke="#e8000b" stroke-width="1"/><path d="M1216.7 250.7L1214.6 248.7" stroke="#e8000b" stroke-width="0.9" stroke-linecap="round"/><path d="M1213.1 247.1L1215.5 247.7L1213.7 249.6Z" fill="#e8000b"/><path d="M1467.8 359.4L1466.3 357.3" stroke="#e8000b" stroke-width="0.9" stroke-linecap="round"/><path d="M1465.0 355.5L1467.3 356.5L1465.2 358.0Z" fill="#e8000b"/><path d="M1173.1 430.9L1175.2 429.6" stroke="#e8000b" stroke-width="0.9" stroke-linecap="round"/><path d="M1177.1 428.4L1175.9 430.7L1174.5 428.5Z" fill="#e8000b"/><path d="M1432.6 358.8L1433.7 361.1" stroke="#e8000b" stroke-width="0.9" stroke-linecap="round"/><path d="M1434.6 363.1L1432.5 361.7L1434.8 360.6Z" fill="#e8000b"/><path d="M1269.7 486.3L1273.0 485.7" stroke="#e8000b" stroke-width="1"/><path d="M1296.5 544.0L1296.1 541.4" stroke="#e8000b" stroke-width="1"/><path d="M1189.5 229.7L1191.7 228.2" stroke="#e8000b" stroke-width="0.9" stroke-linecap="round"/><path d="M1193.5 227.0L1192.4 229.3L1191.0 227.2Z" fill="#e8000b"/><path d="M1197.0 496.5L1199.1 496.2" stroke="#e8000b" stroke-width="0.9" stroke-linecap="round"/><path d="M1201.3 495.9L1199.3 497.5L1198.9 494.9Z" fill="#e8000b"/><path d="M1518.6 426.6L1515.6 426.1" stroke="#e8000b" stroke-width="0.9" stroke-linecap="round"/><path d="M1513.5 425.7L1515.8 424.8L1515.4 427.4Z" fill="#e8000b"/><path d="M1309.2 514.3L1310.4 511.9" stroke="#e8000b" stroke-width="1"/><path d="M1238.2 285.7L1238.3 287.6" stroke="#e8000b" stroke-width="0.9" stroke-linecap="round"/><path d="M1238.5 289.8L1237.0 287.6L1239.6 287.5Z" fill="#e8000b"/><path d="M1241.2 335.5L1243.2 337.7" stroke="#e8000b" stroke-width="0.9" stroke-linecap="round"/><path d="M1244.7 339.3L1242.2 338.6L1244.1 336.8Z" fill="#e8000b"/><path d="M1367.5 527.2L1364.9 528.6" stroke="#e8000b" stroke-width="0.9" stroke-linecap="round"/><path d="M1362.9 529.7L1364.2 527.5L1365.5 529.8Z" fill="#e8000b"/><path d="M1344.2 177.4L1341.7 178.4" stroke="#e8000b" stroke-width="1"/><path d="M1207.2 357.0L1206.6 353.1" stroke="#e8000b" stroke-width="1"/><path d="M1356.6 479.8L1359.7 482.2" stroke="#e8000b" stroke-width="1"/><path d="M1236.9 279.4L1237.4 275.6" stroke="#e8000b" stroke-width="1"/><path d="M1359.1 470.2L1362.1 468.3" stroke="#e8000b" stroke-width="1"/><path d="M1326.4 541.9L1325.5 539.2" stroke="#e8000b" stroke-width="0.9" stroke-linecap="round"/><path d="M1324.8 537.1L1326.8 538.8L1324.3 539.6Z" fill="#e8000b"/><path d="M1507.5 272.5L1504.6 271.4" stroke="#e8000b" stroke-width="0.9" stroke-linecap="round"/><path d="M1502.5 270.6L1505.0 270.2L1504.1 272.6Z" fill="#e8000b"/><path d="M1467.6 224.2L1470.2 226.6" stroke="#e8000b" stroke-width="1"/><path d="M1168.3 265.1L1170.2 266.0" stroke="#e8000b" stroke-width="0.9" stroke-linecap="round"/><path d="M1172.2 267.0L1169.6 267.2L1170.8 264.8Z" fill="#e8000b"/><path d="M1445.7 524.3L1447.0 526.2" stroke="#e8000b" stroke-width="0.9" stroke-linecap="round"/><path d="M1448.3 528.0L1446.0 527.0L1448.1 525.5Z" fill="#e8000b"/><path d="M1397.5 226.5L1399.9 224.3" stroke="#e8000b" stroke-width="0.9" stroke-linecap="round"/><path d="M1401.5 222.9L1400.7 225.3L1399.0 223.4Z" fill="#e8000b"/><path d="M1203.0 340.5L1199.8 340.1" stroke="#e8000b" stroke-width="1"/><path d="M1216.3 295.8L1216.0 293.8" stroke="#e8000b" stroke-width="1"/><path d="M1147.1 300.9L1144.4 298.3" stroke="#e8000b" stroke-width="1"/><path d="M1180.9 274.9L1183.3 275.5" stroke="#e8000b" stroke-width="0.9" stroke-linecap="round"/><path d="M1185.4 276.1L1183.0 276.8L1183.6 274.3Z" fill="#e8000b"/><path d="M1245.5 221.2L1242.8 222.6" stroke="#e8000b" stroke-width="0.9" stroke-linecap="round"/><path d="M1240.9 223.6L1242.2 221.4L1243.4 223.7Z" fill="#e8000b"/><path d="M1459.4 272.2L1461.2 274.6" stroke="#e8000b" stroke-width="0.9" stroke-linecap="round"/><path d="M1462.5 276.4L1460.1 275.4L1462.2 273.8Z" fill="#e8000b"/><path d="M1387.4 486.6L1389.8 488.0" stroke="#e8000b" stroke-width="0.9" stroke-linecap="round"/><path d="M1391.8 489.2L1389.2 489.2L1390.5 486.9Z" fill="#e8000b"/><path d="M1355.7 536.0L1355.4 538.5" stroke="#e8000b" stroke-width="1"/><path d="M1345.5 264.2L1347.5 265.8" stroke="#e8000b" stroke-width="1"/><path d="M1261.7 290.5L1261.9 287.5" stroke="#e8000b" stroke-width="1"/><path d="M1335.0 240.3L1333.9 242.0" stroke="#e8000b" stroke-width="1"/><path d="M1425.9 387.7L1427.3 391.1" stroke="#e8000b" stroke-width="1"/><path d="M1459.4 340.7L1456.7 340.8" stroke="#e8000b" stroke-width="0.9" stroke-linecap="round"/><path d="M1454.5 340.9L1456.6 339.5L1456.7 342.1Z" fill="#e8000b"/><path d="M1273.7 498.8L1273.1 496.8" stroke="#e8000b" stroke-width="0.9" stroke-linecap="round"/><path d="M1272.5 494.7L1274.4 496.5L1271.9 497.2Z" fill="#e8000b"/><path d="M1167.6 462.7L1167.5 465.2" stroke="#e8000b" stroke-width="1"/><path d="M1479.5 434.9L1478.9 437.7" stroke="#e8000b" stroke-width="1"/><path d="M1254.3 351.5L1256.2 354.5" stroke="#e8000b" stroke-width="1"/><path d="M1519.3 386.1L1519.4 389.3" stroke="#e8000b" stroke-width="0.9" stroke-linecap="round"/><path d="M1519.5 391.5L1518.1 389.3L1520.7 389.2Z" fill="#e8000b"/><path d="M1260.7 310.9L1264.1 310.9" stroke="#e8000b" stroke-width="1"/><path d="M1218.4 369.4L1221.3 369.5" stroke="#e8000b" stroke-width="1"/><path d="M1175.0 327.8L1177.0 328.3" stroke="#e8000b" stroke-width="1"/><path d="M1258.7 262.0L1255.3 260.0" stroke="#e8000b" stroke-width="1"/><path d="M1432.7 429.7L1432.1 426.9" stroke="#e8000b" stroke-width="0.9" stroke-linecap="round"/><path d="M1431.6 424.8L1433.4 426.6L1430.8 427.2Z" fill="#e8000b"/><path d="M1422.4 424.1L1425.0 424.8" stroke="#e8000b" stroke-width="0.9" stroke-linecap="round"/><path d="M1427.2 425.4L1424.7 426.1L1425.4 423.6Z" fill="#e8000b"/><path d="M1487.9 417.8L1487.6 415.2" stroke="#e8000b" stroke-width="0.9" stroke-linecap="round"/><path d="M1487.4 413.0L1488.9 415.0L1486.3 415.3Z" fill="#e8000b"/><path d="M1194.3 376.9L1191.6 376.8" stroke="#e8000b" stroke-width="0.9" stroke-linecap="round"/><path d="M1189.4 376.7L1191.6 375.5L1191.6 378.1Z" fill="#e8000b"/><path d="M1453.8 496.4L1451.3 495.0" stroke="#e8000b" stroke-width="0.9" stroke-linecap="round"/><path d="M1449.4 493.8L1452.0 493.8L1450.6 496.1Z" fill="#e8000b"/><path d="M1191.9 312.5L1194.1 314.1" stroke="#e8000b" stroke-width="0.9" stroke-linecap="round"/><path d="M1195.8 315.5L1193.3 315.2L1194.9 313.1Z" fill="#e8000b"/><path d="M1330.8 171.3L1331.5 169.0" stroke="#e8000b" stroke-width="0.9" stroke-linecap="round"/><path d="M1332.2 166.9L1332.8 169.4L1330.3 168.6Z" fill="#e8000b"/><path d="M1397.1 196.1L1396.9 193.2" stroke="#e8000b" stroke-width="1"/><path d="M1169.0 274.9L1168.7 272.2" stroke="#e8000b" stroke-width="1"/><path d="M1439.1 413.7L1437.7 411.9" stroke="#e8000b" stroke-width="1"/><path d="M1197.5 270.3L1197.4 267.2" stroke="#e8000b" stroke-width="1"/><path d="M1361.4 174.9L1364.2 176.0" stroke="#e8000b" stroke-width="1"/><path d="M1321.9 216.8L1324.0 215.1" stroke="#e8000b" stroke-width="1"/><path d="M1146.8 351.3L1148.2 348.4" stroke="#e8000b" stroke-width="0.9" stroke-linecap="round"/><path d="M1149.1 346.4L1149.4 349.0L1147.0 347.9Z" fill="#e8000b"/><path d="M1222.2 399.7L1224.6 402.7" stroke="#e8000b" stroke-width="1"/><path d="M1459.9 371.0L1461.6 369.5" stroke="#e8000b" stroke-width="0.9" stroke-linecap="round"/><path d="M1463.3 368.0L1462.4 370.5L1460.8 368.5Z" fill="#e8000b"/><path d="M1230.2 524.6L1228.2 524.8" stroke="#e8000b" stroke-width="1"/><path d="M1141.4 364.2L1138.5 365.2" stroke="#e8000b" stroke-width="1"/><path d="M1194.9 305.9L1193.8 308.4" stroke="#e8000b" stroke-width="0.9" stroke-linecap="round"/><path d="M1192.9 310.4L1192.6 307.8L1195.0 308.9Z" fill="#e8000b"/><path d="M1467.3 217.4L1469.3 216.4" stroke="#e8000b" stroke-width="0.9" stroke-linecap="round"/><path d="M1471.3 215.4L1469.9 217.6L1468.7 215.2Z" fill="#e8000b"/><path d="M1491.6 284.5L1489.3 286.9" stroke="#e8000b" stroke-width="1"/><path d="M1247.3 189.1L1249.5 190.7" stroke="#e8000b" stroke-width="0.9" stroke-linecap="round"/><path d="M1251.3 192.0L1248.7 191.7L1250.3 189.6Z" fill="#e8000b"/><path d="M1251.4 539.6L1251.4 542.5" stroke="#e8000b" stroke-width="1"/><path d="M1339.3 245.0L1337.1 247.2" stroke="#e8000b" stroke-width="0.9" stroke-linecap="round"/><path d="M1335.5 248.8L1336.1 246.3L1338.0 248.1Z" fill="#e8000b"/><path d="M1484.9 490.7L1482.8 488.5" stroke="#e8000b" stroke-width="0.9" stroke-linecap="round"/><path d="M1481.3 486.9L1483.8 487.6L1481.9 489.4Z" fill="#e8000b"/><path d="M1506.9 386.9L1506.5 384.8" stroke="#e8000b" stroke-width="1"/><path d="M1425.6 348.1L1425.7 346.0" stroke="#e8000b" stroke-width="0.9" stroke-linecap="round"/><path d="M1425.7 343.8L1427.0 346.1L1424.4 346.0Z" fill="#e8000b"/><path d="M1251.6 189.3L1253.8 188.3" stroke="#e8000b" stroke-width="1"/><path d="M1256.1 461.9L1259.0 461.5" stroke="#e8000b" stroke-width="1"/><path d="M1205.3 233.9L1206.0 236.7" stroke="#e8000b" stroke-width="0.9" stroke-linecap="round"/><path d="M1206.6 238.8L1204.8 237.1L1207.3 236.4Z" fill="#e8000b"/><path d="M1333.9 256.9L1336.6 255.1" stroke="#e8000b" stroke-width="0.9" stroke-linecap="round"/><path d="M1338.4 253.9L1337.3 256.2L1335.9 254.0Z" fill="#e8000b"/><path d="M1315.5 225.1L1316.3 227.3" stroke="#e8000b" stroke-width="1"/><path d="M1273.4 206.0L1273.6 208.9" stroke="#e8000b" stroke-width="1"/><path d="M1362.2 520.5L1362.1 517.0" stroke="#e8000b" stroke-width="1"/><path d="M1164.2 279.6L1166.6 279.1" stroke="#e8000b" stroke-width="1"/><path d="M1476.5 255.3L1476.1 258.2" stroke="#e8000b" stroke-width="1"/><path d="M1489.3 356.9L1487.6 355.9" stroke="#e8000b" stroke-width="1"/><path d="M1292.7 536.1L1294.0 533.6" stroke="#e8000b" stroke-width="0.9" stroke-linecap="round"/><path d="M1295.0 531.7L1295.1 534.2L1292.8 533.0Z" fill="#e8000b"/><path d="M1507.2 455.1L1505.7 453.1" stroke="#e8000b" stroke-width="0.9" stroke-linecap="round"/><path d="M1504.4 451.3L1506.7 452.3L1504.7 453.9Z" fill="#e8000b"/><path d="M1230.7 533.4L1228.8 530.9" stroke="#e8000b" stroke-width="1"/><path d="M1189.9 269.5L1188.4 267.8" stroke="#e8000b" stroke-width="0.9" stroke-linecap="round"/><path d="M1187.0 266.1L1189.4 266.9L1187.5 268.6Z" fill="#e8000b"/><path d="M1291.4 258.3L1289.7 257.1" stroke="#e8000b" stroke-width="1"/><path d="M1257.6 352.0L1259.6 351.4" stroke="#e8000b" stroke-width="0.9" stroke-linecap="round"/><path d="M1261.7 350.9L1259.9 352.7L1259.2 350.2Z" fill="#e8000b"/><path d="M1484.7 357.7L1484.9 360.6" stroke="#e8000b" stroke-width="1"/><path d="M1514.6 448.3L1513.9 450.3" stroke="#e8000b" stroke-width="1"/><path d="M1400.3 535.4L1400.6 537.5" stroke="#e8000b" stroke-width="1"/><path d="M1406.2 248.2L1406.9 246.0" stroke="#e8000b" stroke-width="0.9" stroke-linecap="round"/><path d="M1407.5 243.9L1408.1 246.3L1405.7 245.6Z" fill="#e8000b"/><path d="M1336.9 251.1L1339.9 250.5" stroke="#e8000b" stroke-width="1"/><path d="M1459.8 261.2L1460.2 263.6" stroke="#e8000b" stroke-width="0.9" stroke-linecap="round"/><path d="M1460.6 265.8L1459.0 263.8L1461.5 263.4Z" fill="#e8000b"/><path d="M1255.0 546.0L1252.4 546.1" stroke="#e8000b" stroke-width="1"/><path d="M1227.1 334.7L1225.5 332.0" stroke="#e8000b" stroke-width="0.9" stroke-linecap="round"/><path d="M1224.4 330.1L1226.6 331.4L1224.4 332.7Z" fill="#e8000b"/><path d="M1197.1 325.4L1197.8 328.5" stroke="#e8000b" stroke-width="0.9" stroke-linecap="round"/><path d="M1198.3 330.7L1196.6 328.8L1199.1 328.2Z" fill="#e8000b"/><path d="M1163.5 325.4L1165.8 323.6" stroke="#e8000b" stroke-width="0.9" stroke-linecap="round"/><path d="M1167.5 322.3L1166.5 324.7L1165.0 322.6Z" fill="#e8000b"/><path d="M1503.3 300.1L1504.5 302.9" stroke="#e8000b" stroke-width="0.9" stroke-linecap="round"/><path d="M1505.4 304.9L1503.3 303.4L1505.7 302.4Z" fill="#e8000b"/><path d="M1249.1 308.8L1251.5 308.2" stroke="#e8000b" stroke-width="1"/><path d="M1279.1 494.5L1280.6 491.4" stroke="#e8000b" stroke-width="1"/><path d="M1159.2 357.0L1157.1 359.2" stroke="#e8000b" stroke-width="0.9" stroke-linecap="round"/><path d="M1155.6 360.8L1156.2 358.3L1158.0 360.1Z" fill="#e8000b"/><path d="M1215.3 313.9L1217.0 312.6" stroke="#e8000b" stroke-width="1"/><path d="M1300.2 490.7L1300.4 488.5" stroke="#e8000b" stroke-width="1"/><path d="M1498.8 271.5L1498.8 268.6" stroke="#e8000b" stroke-width="0.9" stroke-linecap="round"/><path d="M1498.7 266.4L1500.1 268.6L1497.5 268.6Z" fill="#e8000b"/><path d="M1513.5 413.7L1513.3 416.0" stroke="#e8000b" stroke-width="0.9" stroke-linecap="round"/><path d="M1513.2 418.2L1512.0 415.9L1514.6 416.1Z" fill="#e8000b"/><path d="M1263.4 278.9L1265.9 278.9" stroke="#e8000b" stroke-width="0.9" stroke-linecap="round"/><path d="M1268.1 279.0L1265.8 280.2L1265.9 277.6Z" fill="#e8000b"/><path d="M1497.4 420.4L1499.4 419.7" stroke="#e8000b" stroke-width="1"/><path d="M1231.2 357.7L1234.2 356.9" stroke="#e8000b" stroke-width="0.9" stroke-linecap="round"/><path d="M1236.4 356.3L1234.6 358.1L1233.9 355.6Z" fill="#e8000b"/><path d="M1453.0 461.7L1454.1 459.5" stroke="#e8000b" stroke-width="0.9" stroke-linecap="round"/><path d="M1455.1 457.5L1455.3 460.0L1452.9 458.9Z" fill="#e8000b"/><path d="M1264.6 312.9L1265.1 310.7" stroke="#e8000b" stroke-width="1"/><path d="M1217.0 467.4L1217.0 469.6" stroke="#e8000b" stroke-width="1"/><path d="M1153.2 388.3L1151.7 391.1" stroke="#e8000b" stroke-width="0.9" stroke-linecap="round"/><path d="M1150.7 393.1L1150.6 390.6L1152.9 391.7Z" fill="#e8000b"/><path d="M1243.3 203.2L1246.4 205.3" stroke="#e8000b" stroke-width="1"/><path d="M1231.3 334.7L1229.8 333.2" stroke="#e8000b" stroke-width="0.9" stroke-linecap="round"/><path d="M1228.2 331.7L1230.7 332.2L1228.9 334.1Z" fill="#e8000b"/><path d="M1431.7 504.6L1430.5 502.5" stroke="#e8000b" stroke-width="1"/><path d="M1467.9 286.0L1464.9 284.7" stroke="#e8000b" stroke-width="1"/><path d="M1427.8 248.7L1427.9 251.5" stroke="#e8000b" stroke-width="1"/><path d="M1294.5 562.0L1291.7 561.9" stroke="#e8000b" stroke-width="1"/><path d="M1455.3 428.1L1457.6 427.9" stroke="#e8000b" stroke-width="1"/><path d="M1325.2 493.5L1326.8 491.0" stroke="#e8000b" stroke-width="0.9" stroke-linecap="round"/><path d="M1328.0 489.2L1327.9 491.7L1325.7 490.3Z" fill="#e8000b"/><path d="M1155.7 286.0L1157.7 287.8" stroke="#e8000b" stroke-width="1"/><path d="M1519.5 400.4L1522.4 399.0" stroke="#e8000b" stroke-width="1"/><path d="M1477.8 347.4L1477.6 349.9" stroke="#e8000b" stroke-width="0.9" stroke-linecap="round"/><path d="M1477.5 352.1L1476.3 349.8L1478.9 350.0Z" fill="#e8000b"/><path d="M1224.9 315.6L1226.6 317.7" stroke="#e8000b" stroke-width="1"/><path d="M1239.4 406.8L1237.8 404.6" stroke="#e8000b" stroke-width="1"/><path d="M1404.5 243.1L1403.5 245.6" stroke="#e8000b" stroke-width="1"/><path d="M1450.2 386.5L1452.3 387.4" stroke="#e8000b" stroke-width="1"/><path d="M1389.3 206.0L1390.4 207.9" stroke="#e8000b" stroke-width="0.9" stroke-linecap="round"/><path d="M1391.6 209.8L1389.3 208.6L1391.5 207.2Z" fill="#e8000b"/><path d="M1260.0 546.5L1258.4 550.2" stroke="#e8000b" stroke-width="1"/><path d="M1281.9 247.9L1281.5 245.2" stroke="#e8000b" stroke-width="1"/><path d="M1305.3 494.0L1302.9 495.7" stroke="#e8000b" stroke-width="0.9" stroke-linecap="round"/><path d="M1301.0 496.9L1302.1 494.6L1303.6 496.7Z" fill="#e8000b"/><path d="M1319.8 234.2L1323.7 234.6" stroke="#e8000b" stroke-width="1"/><path d="M1389.9 529.4L1391.5 530.4" stroke="#e8000b" stroke-width="0.9" stroke-linecap="round"/><path d="M1393.4 531.6L1390.8 531.5L1392.2 529.3Z" fill="#e8000b"/><path d="M1196.9 281.9L1193.9 281.5" stroke="#e8000b" stroke-width="0.9" stroke-linecap="round"/><path d="M1191.7 281.2L1194.1 280.2L1193.7 282.8Z" fill="#e8000b"/><path d="M1182.4 363.8L1183.5 360.8" stroke="#e8000b" stroke-width="0.9" stroke-linecap="round"/><path d="M1184.2 358.7L1184.7 361.2L1182.3 360.3Z" fill="#e8000b"/><path d="M1217.0 220.0L1220.0 218.9" stroke="#e8000b" stroke-width="0.9" stroke-linecap="round"/><path d="M1222.0 218.1L1220.4 220.1L1219.5 217.7Z" fill="#e8000b"/><path d="M1328.3 191.1L1331.3 189.6" stroke="#e8000b" stroke-width="1"/><path d="M1492.6 415.0L1493.8 412.8" stroke="#e8000b" stroke-width="1"/><path d="M1446.5 257.7L1444.2 259.3" stroke="#e8000b" stroke-width="0.9" stroke-linecap="round"/><path d="M1442.4 260.5L1443.5 258.2L1444.9 260.4Z" fill="#e8000b"/><path d="M1463.4 242.3L1464.1 245.6" stroke="#e8000b" stroke-width="1"/><path d="M1188.0 267.6L1187.5 264.7" stroke="#e8000b" stroke-width="0.9" stroke-linecap="round"/><path d="M1187.2 262.5L1188.8 264.5L1186.2 264.9Z" fill="#e8000b"/><path d="M1156.0 392.1L1156.1 390.0" stroke="#e8000b" stroke-width="1"/><path d="M1466.9 216.5L1463.7 214.2" stroke="#e8000b" stroke-width="1"/><path d="M1149.1 414.5L1146.3 414.6" stroke="#e8000b" stroke-width="1"/><path d="M1437.8 478.1L1435.3 478.8" stroke="#e8000b" stroke-width="1"/><path d="M1324.6 212.3L1327.0 214.8" stroke="#e8000b" stroke-width="1"/><path d="M1175.8 344.6L1173.6 344.4" stroke="#e8000b" stroke-width="1"/><path d="M1388.2 202.5L1387.9 200.0" stroke="#e8000b" stroke-width="0.9" stroke-linecap="round"/><path d="M1387.7 197.8L1389.2 199.8L1386.7 200.1Z" fill="#e8000b"/><path d="M1339.5 191.4L1336.2 191.4" stroke="#e8000b" stroke-width="1"/><path d="M1425.5 491.9L1426.6 495.0" stroke="#e8000b" stroke-width="0.9" stroke-linecap="round"/><path d="M1427.4 497.0L1425.4 495.4L1427.9 494.5Z" fill="#e8000b"/><path d="M1331.8 547.9L1334.1 546.6" stroke="#e8000b" stroke-width="1"/><path d="M1165.6 308.6L1165.7 306.1" stroke="#e8000b" stroke-width="1"/><path d="M1489.6 278.6L1490.7 276.3" stroke="#e8000b" stroke-width="1"/><path d="M1335.9 533.4L1336.6 536.2" stroke="#e8000b" stroke-width="1"/><path d="M1405.1 523.7L1406.3 525.9" stroke="#e8000b" stroke-width="0.9" stroke-linecap="round"/><path d="M1407.4 527.8L1405.2 526.5L1407.5 525.3Z" fill="#e8000b"/><path d="M1184.9 379.6L1182.7 377.2" stroke="#e8000b" stroke-width="1"/><path d="M1480.5 389.3L1477.9 387.9" stroke="#e8000b" stroke-width="0.9" stroke-linecap="round"/><path d="M1476.0 386.8L1478.5 386.8L1477.3 389.0Z" fill="#e8000b"/><path d="M1451.1 274.6L1452.9 274.5" stroke="#e8000b" stroke-width="0.9" stroke-linecap="round"/><path d="M1455.1 274.3L1453.0 275.8L1452.8 273.2Z" fill="#e8000b"/><path d="M1280.5 472.0L1278.0 473.0" stroke="#e8000b" stroke-width="1"/><path d="M1430.0 189.1L1431.2 186.5" stroke="#e8000b" stroke-width="1"/><path d="M1389.3 558.7L1387.5 557.6" stroke="#e8000b" stroke-width="0.9" stroke-linecap="round"/><path d="M1385.6 556.5L1388.1 556.5L1386.8 558.7Z" fill="#e8000b"/><path d="M1339.9 523.7L1341.8 525.8" stroke="#e8000b" stroke-width="1"/><path d="M1394.7 178.8L1398.0 178.9" stroke="#e8000b" stroke-width="1"/><path d="M1181.5 311.1L1181.8 312.9" stroke="#e8000b" stroke-width="0.9" stroke-linecap="round"/><path d="M1182.1 315.1L1180.5 313.1L1183.1 312.7Z" fill="#e8000b"/><path d="M1369.7 250.7L1367.1 248.1" stroke="#e8000b" stroke-width="1"/><path d="M1235.0 229.0L1236.7 230.1" stroke="#e8000b" stroke-width="0.9" stroke-linecap="round"/><path d="M1238.5 231.4L1235.9 231.2L1237.4 229.1Z" fill="#e8000b"/><path d="M1479.8 479.0L1477.4 480.6" stroke="#e8000b" stroke-width="1"/><path d="M1505.5 459.7L1505.5 462.7" stroke="#e8000b" stroke-width="0.9" stroke-linecap="round"/><path d="M1505.5 464.9L1504.2 462.7L1506.8 462.7Z" fill="#e8000b"/><path d="M1157.2 380.0L1154.8 381.5" stroke="#e8000b" stroke-width="1"/><path d="M1144.8 387.6L1147.1 386.7" stroke="#e8000b" stroke-width="1"/><path d="M1217.8 410.2L1215.8 410.1" stroke="#e8000b" stroke-width="0.9" stroke-linecap="round"/><path d="M1213.6 410.0L1215.8 408.8L1215.7 411.4Z" fill="#e8000b"/><path d="M1457.2 239.0L1456.1 241.8" stroke="#e8000b" stroke-width="1"/><path d="M1445.4 452.6L1448.1 452.7" stroke="#e8000b" stroke-width="0.9" stroke-linecap="round"/><path d="M1450.3 452.8L1448.1 454.0L1448.2 451.4Z" fill="#e8000b"/><path d="M1430.6 353.8L1430.4 350.2" stroke="#e8000b" stroke-width="1"/><path d="M1228.1 211.6L1228.4 213.7" stroke="#e8000b" stroke-width="1"/><path d="M1270.9 466.1L1269.9 463.5" stroke="#e8000b" stroke-width="0.9" stroke-linecap="round"/><path d="M1269.2 461.4L1271.1 463.1L1268.7 464.0Z" fill="#e8000b"/><path d="M1447.5 376.7L1447.3 378.7" stroke="#e8000b" stroke-width="0.9" stroke-linecap="round"/><path d="M1447.1 380.9L1446.0 378.6L1448.6 378.8Z" fill="#e8000b"/><path d="M1241.5 263.3L1241.4 260.2" stroke="#e8000b" stroke-width="0.9" stroke-linecap="round"/><path d="M1241.3 258.0L1242.7 260.1L1240.1 260.2Z" fill="#e8000b"/><path d="M1431.0 299.1L1433.3 297.0" stroke="#e8000b" stroke-width="1"/><path d="M1233.3 528.5L1231.8 526.9" stroke="#e8000b" stroke-width="0.9" stroke-linecap="round"/><path d="M1230.3 525.3L1232.7 526.0L1230.8 527.7Z" fill="#e8000b"/><path d="M1399.4 556.7L1396.8 557.2" stroke="#e8000b" stroke-width="0.9" stroke-linecap="round"/><path d="M1394.6 557.7L1396.5 556.0L1397.0 558.5Z" fill="#e8000b"/><path d="M1412.1 508.7L1409.9 509.6" stroke="#e8000b" stroke-width="0.9" stroke-linecap="round"/><path d="M1407.9 510.5L1409.4 508.4L1410.4 510.8Z" fill="#e8000b"/><path d="M1222.7 415.9L1225.3 417.3" stroke="#e8000b" stroke-width="0.9" stroke-linecap="round"/><path d="M1227.2 418.4L1224.7 418.5L1225.9 416.2Z" fill="#e8000b"/><path d="M1274.5 226.0L1276.6 226.4" stroke="#e8000b" stroke-width="1"/><path d="M1165.6 403.2L1163.9 405.3" stroke="#e8000b" stroke-width="0.9" stroke-linecap="round"/><path d="M1162.5 406.9L1162.9 404.4L1164.9 406.1Z" fill="#e8000b"/><path d="M1459.6 522.1L1462.2 523.2" stroke="#e8000b" stroke-width="0.9" stroke-linecap="round"/><path d="M1464.2 524.1L1461.7 524.4L1462.8 522.0Z" fill="#e8000b"/><path d="M1181.8 251.3L1183.4 252.6" stroke="#e8000b" stroke-width="1"/><path d="M1470.6 490.7L1468.8 488.7" stroke="#e8000b" stroke-width="0.9" stroke-linecap="round"/><path d="M1467.4 487.1L1469.8 487.9L1467.9 489.6Z" fill="#e8000b"/><path d="M1435.4 251.0L1433.9 254.1" stroke="#e8000b" stroke-width="1"/><path d="M977.7 527.5L978.5 503" stroke="#3a7cc4" stroke-width="1.6"/><path d="M978.7 497.5L981.5 506H975.5Z" fill="#3a7cc4"/><path d="M977.7 527.5L999 528.3" stroke="#e02a6a" stroke-width="1.6"/><path d="M1005.5 528.5L997 525.3V531.5Z" fill="#e02a6a"/><path d="M977.7 527.5L971 528.5" stroke="#3aa23a" stroke-width="1.4"/><circle cx="970.5" cy="528.5" r="2.4" fill="#3aa23a"/></svg>
<div class="t" style="left:951.20px;top:66.36px;font-size:12.8px;line-height:20px;color:#111;letter-spacing:0.65px">Ystub(4)=0.113 m freq(3)=2 GHz</div>
<div class="t" style="left:1320.00px;top:66.36px;font-size:12.8px;line-height:20px;color:#111;letter-spacing:0.33px">Arrow Volume: Electric field</div>
<div class="t" style="left:1163.00px;top:76.54px;font-size:12px;line-height:20px;color:#111;letter-spacing:0.5px">-0.2</div>
<div class="t" style="left:1264.00px;top:68.44px;font-size:12px;line-height:20px;color:#111;letter-spacing:0.5px">-0.2</div>
<div class="t" style="left:1126.00px;top:99.34px;font-size:12px;line-height:20px;color:#111;letter-spacing:0px">0</div>
<div class="t" style="left:1070.00px;top:120.84px;font-size:12px;line-height:20px;color:#111;letter-spacing:0.75px">0.2</div>
<div class="t" style="left:1424.00px;top:80.84px;font-size:12px;line-height:20px;color:#111;letter-spacing:0px">0</div>
<div class="t" style="left:1569.00px;top:92.34px;font-size:12px;line-height:20px;color:#111;letter-spacing:0.75px">0.2</div>
<div class="t" style="left:1654.00px;top:191.04px;font-size:12px;line-height:20px;color:#111;letter-spacing:0.75px">0.2</div>
<div class="t" style="left:1652.00px;top:350.34px;font-size:12px;line-height:20px;color:#111;letter-spacing:0px">0</div>
<div class="t" style="left:1652.00px;top:510.34px;font-size:12px;line-height:20px;color:#111;letter-spacing:0.5px">-0.2</div>
<div class="t" style="left:1100.60px;top:72.23px;font-size:10px;line-height:20px;color:#111;letter-spacing:0px">m</div>
<div class="t" style="left:1433.00px;top:48.23px;font-size:10px;line-height:20px;color:#111;letter-spacing:0px">m</div>
<div class="t" style="left:1688.50px;top:348.53px;font-size:10px;line-height:20px;color:#111;letter-spacing:0px">m</div>
<div class="t" style="left:974.50px;top:478.52px;font-size:11.5px;line-height:20px;color:#111;letter-spacing:0px">z</div>
<div class="t" style="left:1009.50px;top:518.02px;font-size:11.5px;line-height:20px;color:#111;letter-spacing:0px">x</div>
<div class="t" style="left:962.50px;top:518.02px;font-size:11.5px;line-height:20px;color:#111;letter-spacing:0px">y</div>
<svg style="position:absolute;left:1886px;top:61px;" width="20" height="18" viewBox="0 0 20 18"><path d="M2 4L10 1L20 2V17L8 18Z" fill="#e8e8ea" stroke="#d0d0d0" stroke-width="0.8"/><rect x="6" y="5" width="14" height="10" rx="2" fill="#1c3fb0"/><path d="M8 6.5L16 10L8 13.5Z" fill="#f2e24a"/></svg>
<div style="position:absolute;left:933px;top:577px;width:975px;height:290px;box-sizing:border-box;border:1px solid #d5d6da;background:#f8f9fd"></div>
<div style="position:absolute;left:934px;top:606px;width:972px;height:1px;background:#d5d6da"></div>
<div style="position:absolute;left:938px;top:583px;width:89px;height:24px;box-sizing:border-box;border:1px solid #d5d6da;border-bottom:none;background:#f8f9fd"></div>
<div class="t" style="left:943.30px;top:586.53px;font-size:12.6px;line-height:20px;color:#3063b0;">Messages</div>
<svg style="position:absolute;left:1009.5px;top:591px;" width="10" height="9" viewBox="0 0 10 9"><path d="M1 0.5L9 8.5M9 0.5L1 8.5" stroke="#b5bcc8" stroke-width="1.1"/></svg>
<div style="position:absolute;left:1035px;top:583px;width:60px;height:23px;background:#e9e9ea"></div>
<div class="t" style="left:1039.00px;top:586.13px;font-size:12.6px;line-height:20px;color:#111;">Progress</div>
<div style="position:absolute;left:1103px;top:583px;width:30px;height:23px;background:#e9e9ea"></div>
<div class="t" style="left:1107.00px;top:586.13px;font-size:12.6px;line-height:20px;color:#111;">Log</div>
<div style="position:absolute;left:1141px;top:583px;width:84px;height:23px;background:#e9e9ea"></div>
<div class="t" style="left:1145.00px;top:586.13px;font-size:12.6px;line-height:20px;color:#111;">Directivity</div>
<svg style="position:absolute;left:1209px;top:591px;" width="10" height="9" viewBox="0 0 10 9"><path d="M1 0.5L9 8.5M9 0.5L1 8.5" stroke="#b5bcc8" stroke-width="1.1"/></svg>
<svg style="position:absolute;left:1887px;top:593px;" width="9" height="5" viewBox="0 0 9 5"><path d="M0 0H9L4.5 5Z" fill="#b9c3d3"/></svg>
<div style="position:absolute;left:1903px;top:591px;width:3px;height:7px;background:#b9c3d3"></div>
<svg style="position:absolute;left:943px;top:613px;" width="12" height="17" viewBox="0 0 12 17"><path d="M1.5 0.5L5 8" stroke="#555" stroke-width="1.3"/><path d="M4 7L7 6L11 14L6.5 16Z" fill="#e2c6a2" stroke="#c9a57a" stroke-width="0.6"/><path d="M4.3 7.8L7.2 6.8" stroke="#d05030" stroke-width="1"/></svg>
<div style="position:absolute;left:938px;top:635px;width:970px;height:227px;box-sizing:border-box;border:1px solid #d5d6da;border-right:none;background:#f8f9fd"></div>
<div style="position:absolute;left:1891px;top:636px;width:15px;height:225px;background:#f0f0f0"></div>
<div style="position:absolute;left:1891px;top:772px;width:15px;height:72px;background:#cdcdcd"></div>
<svg style="position:absolute;left:1894px;top:641px;" width="10" height="6" viewBox="0 0 10 6"><path d="M1 5L5 1L9 5" stroke="#9a9a9a" stroke-width="1.05" fill="none"/></svg>
<svg style="position:absolute;left:1894px;top:849px;" width="10" height="6" viewBox="0 0 10 6"><path d="M1 1L5 5L9 1" stroke="#9a9a9a" stroke-width="1.05" fill="none"/></svg>
<div class="t" style="left:941.00px;top:633.70px;font-size:11.55px;line-height:20px;color:#000;">[Aug 23, 2023 1:42 PM] Number of degrees of freedom solved for: 431612.</div>
<div class="t" style="left:941.00px;top:648.70px;font-size:11.55px;line-height:20px;color:#000;">[Aug 23, 2023 2:07 PM] Solution time (Study 1): 1541 s. (25 minutes, 41 seconds)</div>
<div class="t" style="left:941.00px;top:663.70px;font-size:11.55px;line-height:20px;color:#000;">[Aug 23, 2023 2:17 PM] Mesh consists of 169844 domain elements, 31355 boundary elements, and 11104 edge elements.</div>
<div class="t" style="left:941.00px;top:678.70px;font-size:11.55px;line-height:20px;color:#000;">[Aug 23, 2023 2:20 PM] Number of degrees of freedom solved for: 1152366.</div>
<div class="t" style="left:941.00px;top:693.70px;font-size:11.55px;line-height:20px;color:#000;">[Aug 23, 2023 2:51 PM] Mesh consists of 63321 domain elements, 14117 boundary elements, and 5401 edge elements.</div>
<div class="t" style="left:941.00px;top:708.70px;font-size:11.55px;line-height:20px;color:#000;">[Aug 23, 2023 2:54 PM] Number of degrees of freedom solved for: 431612.</div>
<div class="t" style="left:941.00px;top:723.70px;font-size:11.55px;line-height:20px;color:#000;">[Aug 23, 2023 3:28 PM] Number of degrees of freedom solved for: 427106.</div>
<div class="t" style="left:941.00px;top:738.70px;font-size:11.55px;line-height:20px;color:#000;">[Aug 23, 2023 4:02 PM] Number of degrees of freedom solved for: 426428.</div>
<div class="t" style="left:941.00px;top:753.70px;font-size:11.55px;line-height:20px;color:#000;">[Aug 23, 2023 4:36 PM] Number of degrees of freedom solved for: 426572.</div>
<div class="t" style="left:941.00px;top:768.70px;font-size:11.55px;line-height:20px;color:#000;">[Aug 23, 2023 5:11 PM] Number of degrees of freedom solved for: 430564.</div>
<div class="t" style="left:941.00px;top:783.70px;font-size:11.55px;line-height:20px;color:#000;">[Aug 23, 2023 5:47 PM] Solution time (Study 1): 10456 s. (2 hours, 54 minutes, 16 seconds)</div>
<div class="t" style="left:941.00px;top:798.70px;font-size:11.55px;line-height:20px;color:#000;">[Aug 23, 2023 5:51 PM] Formed union of 13 solid objects and 1 surface object.</div>
<div class="t" style="left:941.00px;top:813.70px;font-size:11.55px;line-height:20px;color:#000;">[Aug 23, 2023 5:51 PM] Union has 21 domains, 163 boundaries, 338 edges, and 206 vertices.</div>
<div class="t" style="left:941.00px;top:828.70px;font-size:11.55px;line-height:20px;color:#000;">[Aug 23, 2023 5:51 PM] Finalized geometry has 21 domains, 128 boundaries, 256 edges, and 160 vertices.</div>
</body></html>
